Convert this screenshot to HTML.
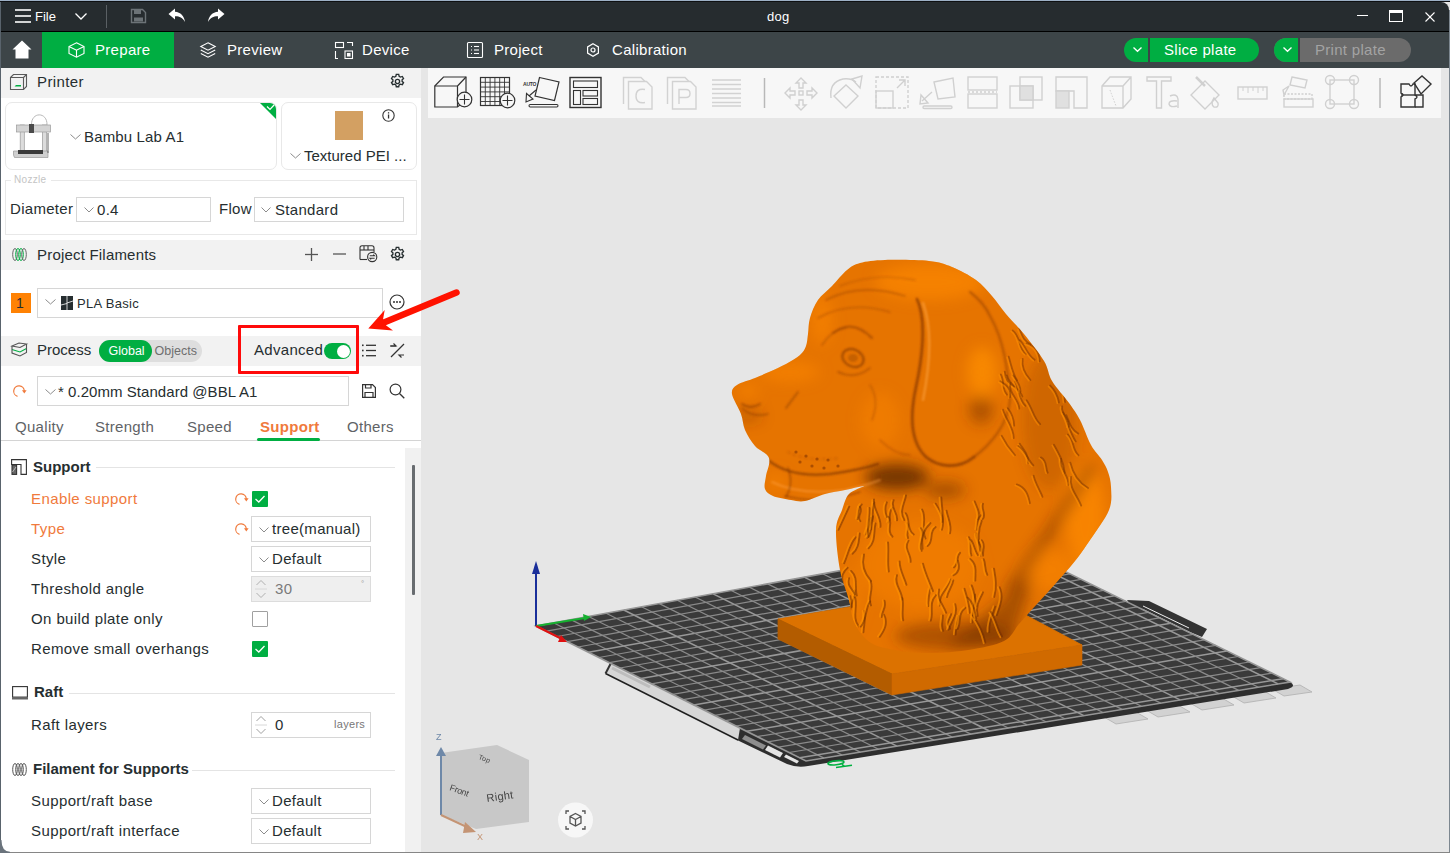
<!DOCTYPE html>
<html><head><meta charset="utf-8">
<style>
*{margin:0;padding:0;box-sizing:border-box}
html,body{width:1450px;height:853px;overflow:hidden}
body{position:relative;background:#e6e6e6;font-family:"Liberation Sans",sans-serif;color:#262e30;letter-spacing:0.3px}
.a{position:absolute}
.t{position:absolute;white-space:nowrap;line-height:1}
svg.i{position:absolute;overflow:visible}
.combo{position:absolute;background:#fff;border:1px solid #d6d6d6}
.chev{position:absolute;width:7px;height:7px;border-right:1px solid #909090;border-bottom:1px solid #909090;transform:rotate(45deg)}
.hdr{position:absolute;left:1px;width:420px;background:#f2f2f2}
.lbl{position:absolute;left:31px;font-size:15px;line-height:1;white-space:nowrap;color:#262e30;letter-spacing:0.4px;margin-top:-1px}
.org{color:#f07a3c}
.cb{position:absolute;left:252px;width:16px;height:16px;background:#00ae42;border-radius:1px}
.cb svg{position:absolute;left:0;top:0}
.cbe{position:absolute;left:252px;width:16px;height:16px;background:#fff;border:1px solid #a0a0a0;border-radius:1px}
.sec{position:absolute;font-size:15px;font-weight:bold;line-height:1;white-space:nowrap;color:#262e30;margin-top:-1.5px;letter-spacing:0px}
.secline{position:absolute;height:1px;background:#e4e4e4}
</style></head>
<body>
<!-- desktop strip -->
<div class="a" style="left:0;top:0;width:1450px;height:1px;background:#9db0c5"></div>
<div class="a" style="left:0;top:1px;width:1450px;height:1px;background:#0e1012"></div>
<!-- title bar -->
<div class="a" style="left:1px;top:2px;width:1448px;height:29px;background:#262c2f;border-top-right-radius:8px"></div>
<!-- tab bar -->
<div class="a" style="left:1px;top:31px;width:1448px;height:1px;background:#000"></div>
<div class="a" style="left:1px;top:32px;width:1448px;height:36px;background:#3d4548"></div>
<!-- left panel -->
<div class="a" style="left:1px;top:68px;width:420px;height:784px;background:#fff"></div>
<!-- window borders -->
<div class="a" style="left:0;top:2px;width:1px;height:851px;background:#59636c"></div>
<div class="a" style="left:1449px;top:10px;width:1px;height:843px;background:#7d8790"></div>
<div class="a" style="left:0;top:852px;width:1450px;height:1px;background:#868686"></div>


<!-- ===== TITLE BAR ===== -->
<svg class="i" style="left:15px;top:9px" width="16" height="14"><g stroke="#fff" stroke-width="1.6"><line x1="0" y1="1" x2="16" y2="1"/><line x1="0" y1="7" x2="16" y2="7"/><line x1="0" y1="13" x2="16" y2="13"/></g></svg>
<div class="t" style="left:35px;top:10px;font-size:13px;color:#fff;letter-spacing:0">File</div>
<svg class="i" style="left:75px;top:13px" width="12" height="7"><polyline points="0.5,0.5 6,6 11.5,0.5" fill="none" stroke="#fff" stroke-width="1.3"/></svg>
<div class="a" style="left:106px;top:5px;width:1px;height:23px;background:#5a6064"></div>
<svg class="i" style="left:130px;top:8px" width="17" height="16"><path d="M1.5 1.5h11l3 3v10h-14z" fill="none" stroke="#6c7377" stroke-width="1.4"/><rect x="4" y="2" width="7" height="4" fill="#6c7377"/><rect x="4" y="9.5" width="9" height="4" fill="#6c7377"/></svg>
<svg class="i" style="left:168px;top:8px" width="18" height="15"><path d="M7 0.5 L0.5 6 L7 11.5 V8.2 C11 8 14.5 9.5 17 14 C16.3 8 12.5 4.3 7 3.8Z" fill="#fff"/></svg>
<svg class="i" style="left:207px;top:8px" width="18" height="15"><path d="M11 0.5 L17.5 6 L11 11.5 V8.2 C7 8 3.5 9.5 1 14 C1.7 8 5.5 4.3 11 3.8Z" fill="#fff"/></svg>
<div class="t" style="left:767px;top:10px;font-size:13px;color:#fff">dog</div>
<div class="a" style="left:1357px;top:15px;width:11px;height:1px;background:#fff"></div>
<div class="a" style="left:1389px;top:10px;width:14px;height:12px;border:1px solid #fff;border-top-width:3px"></div>
<svg class="i" style="left:1425px;top:12px" width="10" height="10"><g stroke="#fff" stroke-width="1.1"><line x1="0.5" y1="0.5" x2="9.5" y2="9.5"/><line x1="9.5" y1="0.5" x2="0.5" y2="9.5"/></g></svg>

<!-- ===== TAB BAR ===== -->
<svg class="i" style="left:12px;top:40px" width="20" height="19"><path d="M10 0.5 L19.5 9.5 H16.5 V18.5 H3.5 V9.5 H0.5Z" fill="#fff"/></svg>
<div class="a" style="left:42px;top:32px;width:132px;height:36px;background:#00ae42"></div>
<svg class="i" style="left:68px;top:42px" width="17" height="16"><g fill="none" stroke="#fff" stroke-width="1.1"><path d="M8.5 0.8 L16 4.5 V11.5 L8.5 15.2 L1 11.5 V4.5Z"/><path d="M1 4.5 L8.5 8.2 L16 4.5 M8.5 8.2 V15.2"/></g></svg>
<div class="t" style="left:95px;top:42px;font-size:15px;color:#fff">Prepare</div>
<svg class="i" style="left:200px;top:42px" width="16" height="16"><g fill="none" stroke="#fff" stroke-width="1.1"><path d="M8 0.8 L15.2 4.5 L8 8.2 L0.8 4.5Z"/><path d="M0.8 8 L8 11.7 L15.2 8"/><path d="M0.8 11.5 L8 15.2 L15.2 11.5"/></g></svg>
<div class="t" style="left:227px;top:42px;font-size:15px;color:#fff">Preview</div>
<svg class="i" style="left:335px;top:42px" width="18" height="17"><g fill="none" stroke="#fff" stroke-width="1.1"><rect x="0.5" y="0.5" width="8" height="5"/><path d="M0.5 9 V16.5 H3 M12 0.5 H17.5 V4"/><rect x="10" y="9" width="7.5" height="7.5"/><rect x="12.5" y="11.5" width="2.5" height="2.5" fill="#fff"/></g></svg>
<div class="t" style="left:362px;top:42px;font-size:15px;color:#fff">Device</div>
<svg class="i" style="left:467px;top:42px" width="16" height="16"><g fill="none" stroke="#fff" stroke-width="1.1"><rect x="0.5" y="0.5" width="15" height="15" rx="1"/><line x1="4" y1="4.5" x2="5" y2="4.5"/><line x1="7" y1="4.5" x2="12" y2="4.5"/><line x1="4" y1="8" x2="5" y2="8"/><line x1="7" y1="8" x2="12" y2="8"/><line x1="4" y1="11.5" x2="5" y2="11.5"/><line x1="7" y1="11.5" x2="12" y2="11.5"/></g></svg>
<div class="t" style="left:494px;top:42px;font-size:15px;color:#fff">Project</div>
<svg class="i" style="left:586px;top:43px" width="14" height="14"><g fill="none" stroke="#fff" stroke-width="1.2"><path d="M7 0.8 L12.4 3.9 V10.1 L7 13.2 L1.6 10.1 V3.9Z"/><circle cx="7" cy="7" r="2"/></g></svg>
<div class="t" style="left:612px;top:42px;font-size:15px;color:#fff">Calibration</div>
<!-- slice / print -->
<div class="a" style="left:1124px;top:38px;width:135px;height:24px;background:#00ae42;border-radius:12px"></div>
<div class="a" style="left:1148px;top:38px;width:2px;height:24px;background:#3c4447"></div>
<svg class="i" style="left:1133px;top:47px" width="9" height="5"><polyline points="0.5,0.5 4.5,4.3 8.5,0.5" fill="none" stroke="#fff" stroke-width="1.3"/></svg>
<div class="t" style="left:1164px;top:42px;font-size:15px;color:#fff">Slice plate</div>
<div class="a" style="left:1274px;top:38px;width:137px;height:24px;background:#6b6b6b;border-radius:12px"></div>
<div class="a" style="left:1274px;top:38px;width:24px;height:24px;background:#00ae42;border-radius:12px 0 0 12px"></div>
<div class="a" style="left:1298px;top:38px;width:2px;height:24px;background:#3c4447"></div>
<svg class="i" style="left:1283px;top:47px" width="9" height="5"><polyline points="0.5,0.5 4.5,4.3 8.5,0.5" fill="none" stroke="#fff" stroke-width="1.3"/></svg>
<div class="t" style="left:1315px;top:42px;font-size:15px;color:#a3a3a3">Print plate</div>


<!-- ===== LEFT PANEL ===== -->
<!-- Printer header -->
<div class="hdr" style="top:68px;height:30px"></div>
<svg class="i" style="left:10px;top:74px" width="17" height="16"><g fill="none" stroke="#5a5a5a" stroke-width="1.1"><path d="M0.5 3.5 L3.5 0.5 H16.5 V12.5 L13.5 15.5 H0.5Z"/><path d="M0.5 3.5 H13.5 V15.5 M13.5 3.5 L16.5 0.5"/></g><path d="M3 12.5 H11 V11 H6 L4.5 12.5Z" fill="#00ae42"/></svg>
<div class="t" style="left:37px;top:74px;font-size:15px;letter-spacing:0.4px">Printer</div>
<svg class="i" style="left:389px;top:73px" width="17" height="17" viewBox="0 0 24 24"><path fill="none" stroke="#262e30" stroke-width="1.9" d="M10.3 2h3.4l.6 2.6 1.9 1.1 2.6-.8 1.7 2.9-2 1.8v2.2l2 1.8-1.7 2.9-2.6-.8-1.9 1.1-.6 2.6h-3.4l-.6-2.6-1.9-1.1-2.6.8-1.7-2.9 2-1.8v-2.2l-2-1.8 1.7-2.9 2.6.8 1.9-1.1z"/><circle cx="12" cy="12" r="3" fill="none" stroke="#262e30" stroke-width="1.9"/></svg>
<!-- printer card -->
<div class="a" style="left:5px;top:102px;width:272px;height:68px;border:1px solid #e8e8e8;border-radius:7px;background:#fff;overflow:hidden">
  <svg class="i" style="right:-1px;top:-1px" width="18" height="18"><path d="M0 0 H18 V18Z" fill="#00ae42"/><polyline points="8,4.5 11,7.5 15.5,2.5" fill="none" stroke="#fff" stroke-width="1.2"/></svg>
</div>
<!-- printer image -->
<svg class="i" style="left:13px;top:112px" width="40" height="48">
 <path d="M18.5 13 C18 -0.5 34.5 -0.5 34 13" fill="none" stroke="#b0b0b0" stroke-width="0.9"/>
 <rect x="7.2" y="13" width="4.1" height="27" fill="#dcdcdc" stroke="#9a9a9a" stroke-width="0.7"/>
 <rect x="29.4" y="13" width="4.1" height="27" fill="#dcdcdc" stroke="#9a9a9a" stroke-width="0.7"/>
 <rect x="3.5" y="13" width="34" height="7" fill="#d4d4d4" stroke="#9a9a9a" stroke-width="0.7"/>
 <rect x="16" y="12" width="5" height="9" fill="#4a4a4a"/>
 <path d="M0.5 39 H35 V45.5 H1.5 Q0 44 0.5 39Z" fill="#cfcfcf" stroke="#9a9a9a" stroke-width="0.7"/>
 <rect x="5" y="38" width="25" height="4" fill="#3a3a3a"/>
 <path d="M35 21 V41" stroke="#555" stroke-width="0.9"/>
</svg>
<svg class="i" style="left:70px;top:134px" width="11" height="6"><polyline points="0.5,0.5 5.5,5 10.5,0.5" fill="none" stroke="#8c8c8c" stroke-width="1"/></svg>
<div class="t" style="left:84px;top:129px;font-size:15px;letter-spacing:0.15px">Bambu Lab A1</div>
<!-- PEI card -->
<div class="a" style="left:281px;top:102px;width:136px;height:68px;border:1px solid #e8e8e8;border-radius:7px;background:#fff"></div>
<div class="a" style="left:335px;top:111px;width:28px;height:29px;background:#d3a062"></div>
<svg class="i" style="left:382px;top:109px" width="13" height="13"><circle cx="6.5" cy="6.5" r="5.7" fill="none" stroke="#333" stroke-width="1.1"/><rect x="5.9" y="5.5" width="1.3" height="4" fill="#333"/><rect x="5.9" y="3.2" width="1.3" height="1.3" fill="#333"/></svg>
<svg class="i" style="left:290px;top:153px" width="11" height="6"><polyline points="0.5,0.5 5.5,5 10.5,0.5" fill="none" stroke="#8c8c8c" stroke-width="1"/></svg>
<div class="t" style="left:304px;top:148px;font-size:15px;letter-spacing:0">Textured PEI ...</div>
<!-- nozzle group -->
<div class="a" style="left:5px;top:180px;width:412px;height:55px;border:1px solid #e8e8e8"></div>
<div class="a" style="left:11px;top:174px;width:40px;height:12px;background:#fff"></div>
<div class="t" style="left:14px;top:175px;font-size:10px;color:#c4c4c4">Nozzle</div>
<div class="t" style="left:10px;top:201px;font-size:15px">Diameter</div>
<div class="combo" style="left:76px;top:197px;width:135px;height:25px"></div>
<svg class="i" style="left:84px;top:207px" width="10" height="6"><polyline points="0.5,0.5 5,5 9.5,0.5" fill="none" stroke="#8c8c8c" stroke-width="1"/></svg>
<div class="t" style="left:97px;top:202px;font-size:15px">0.4</div>
<div class="t" style="left:219px;top:201px;font-size:15px">Flow</div>
<div class="combo" style="left:254px;top:197px;width:150px;height:25px"></div>
<svg class="i" style="left:261px;top:207px" width="10" height="6"><polyline points="0.5,0.5 5,5 9.5,0.5" fill="none" stroke="#8c8c8c" stroke-width="1"/></svg>
<div class="t" style="left:275px;top:202px;font-size:15px">Standard</div>

<!-- Project filaments header -->
<div class="hdr" style="top:240px;height:30px"></div>
<svg class="i" style="left:12px;top:248px" width="15" height="13"><g fill="none" stroke-width="1"><ellipse cx="3" cy="6.5" rx="2.3" ry="6" stroke="#666"/><ellipse cx="6" cy="6.5" rx="2.3" ry="6" stroke="#00ae42"/><ellipse cx="9" cy="6.5" rx="2.3" ry="6" stroke="#00ae42"/><ellipse cx="12" cy="6.5" rx="2.3" ry="6" stroke="#666"/></g></svg>
<div class="t" style="left:37px;top:247px;font-size:15px;letter-spacing:0.2px">Project Filaments</div>
<svg class="i" style="left:305px;top:248px" width="13" height="13"><g stroke="#555" stroke-width="1.3"><line x1="6.5" y1="0" x2="6.5" y2="13"/><line x1="0" y1="6.5" x2="13" y2="6.5"/></g></svg>
<svg class="i" style="left:333px;top:253px" width="13" height="2"><line x1="0" y1="1" x2="13" y2="1" stroke="#555" stroke-width="1.3"/></svg>
<svg class="i" style="left:359px;top:245px" width="19" height="17"><g fill="none" stroke="#333" stroke-width="1.1"><path d="M1 14.5 V3 Q1 0.8 3 0.8 H13 Q15 0.8 15 3 V7"/><line x1="1" y1="5" x2="15" y2="5"/><line x1="5" y1="1" x2="5" y2="5"/><line x1="9" y1="1" x2="9" y2="5"/><line x1="1" y1="14.5" x2="8" y2="14.5"/><circle cx="13.2" cy="12" r="4.6" fill="#f2f2f2"/><path d="M10.8 10.8 H15.5 L14.3 9.6 M15.6 13.2 H10.9 L12.1 14.4"/></g></svg>
<svg class="i" style="left:389px;top:246px" width="17" height="17" viewBox="0 0 24 24"><path fill="none" stroke="#262e30" stroke-width="1.9" d="M10.3 2h3.4l.6 2.6 1.9 1.1 2.6-.8 1.7 2.9-2 1.8v2.2l2 1.8-1.7 2.9-2.6-.8-1.9 1.1-.6 2.6h-3.4l-.6-2.6-1.9-1.1-2.6.8-1.7-2.9 2-1.8v-2.2l-2-1.8 1.7-2.9 2.6.8 1.9-1.1z"/><circle cx="12" cy="12" r="3" fill="none" stroke="#262e30" stroke-width="1.9"/></svg>
<!-- filament row -->
<div class="a" style="left:11px;top:293px;width:20px;height:20px;background:#ff8204"></div>
<div class="t" style="left:16px;top:296px;font-size:14px;color:#262e30">1</div>
<div class="combo" style="left:37px;top:288px;width:346px;height:30px"></div>
<svg class="i" style="left:45px;top:299px" width="11" height="6"><polyline points="0.5,0.5 5.5,5 10.5,0.5" fill="none" stroke="#8c8c8c" stroke-width="1"/></svg>
<svg class="i" style="left:61px;top:296px" width="12" height="14"><rect x="0" y="0" width="12" height="14" fill="#262e30"/><line x1="6" y1="0" x2="6" y2="14" stroke="#fff" stroke-width="0.8"/><line x1="6" y1="7" x2="12" y2="5" stroke="#fff" stroke-width="0.8"/><line x1="0" y1="9" x2="6" y2="7.5" stroke="#fff" stroke-width="0.8"/></svg>
<div class="t" style="left:77px;top:297px;font-size:13px">PLA Basic</div>
<svg class="i" style="left:389px;top:294px" width="16" height="16"><circle cx="8" cy="8" r="7" fill="none" stroke="#333" stroke-width="1.2"/><circle cx="5" cy="8" r="1" fill="#333"/><circle cx="8" cy="8" r="1" fill="#333"/><circle cx="11" cy="8" r="1" fill="#333"/></svg>

<!-- Process header -->
<div class="hdr" style="top:336px;height:30px"></div>
<svg class="i" style="left:11px;top:342px" width="17" height="15"><g fill="none" stroke-width="1.1"><path d="M1 4 L8 1 L15.5 2 L9 5.5Z" stroke="#555"/><path d="M1 7.5 L9 10 L15.5 6.5" stroke="#00ae42"/><path d="M1 4 V11 L9 14 L15.5 10.5 V2" stroke="#555"/></g></svg>
<div class="t" style="left:37px;top:342px;font-size:15px;letter-spacing:0px">Process</div>
<div class="a" style="left:99px;top:340px;width:103px;height:22px;background:#dedede;border-radius:11px"></div>
<div class="a" style="left:99px;top:340px;width:53px;height:22px;background:#00ae42;border-radius:11px"></div>
<div class="t" style="left:108.5px;top:344.5px;font-size:12.5px;color:#fff;letter-spacing:0">Global</div>
<div class="t" style="left:154.5px;top:344.5px;font-size:12.5px;color:#6e6e6e;letter-spacing:0">Objects</div>
<div class="t" style="left:254px;top:342px;font-size:15px">Advanced</div>
<div class="a" style="left:324px;top:343px;width:27px;height:16px;background:#00ae42;border-radius:8px"></div>
<div class="a" style="left:337px;top:344.5px;width:13px;height:13px;background:#fff;border-radius:50%"></div>
<svg class="i" style="left:362px;top:344px" width="15" height="13"><g fill="#333"><rect x="0" y="0.5" width="1.6" height="1.6"/><rect x="0" y="5.7" width="1.6" height="1.6"/><rect x="0" y="10.9" width="1.6" height="1.6"/></g><g stroke="#333" stroke-width="1.3"><line x1="4" y1="1.3" x2="14" y2="1.3"/><line x1="4" y1="6.5" x2="14" y2="6.5"/><line x1="4" y1="11.7" x2="14" y2="11.7"/></g></svg>
<svg class="i" style="left:390px;top:343px" width="15" height="15"><g fill="none" stroke="#333" stroke-width="1.2"><line x1="1" y1="14" x2="14" y2="1"/><polyline points="1,3 6,3 3.5,0.5"/><polyline points="14,12 9,12 11.5,14.5"/><line x1="0" y1="3" x2="6" y2="3"/></g></svg>

<!-- profile combo -->
<svg class="i" style="left:12px;top:384px" width="14" height="14"><path d="M5.5 12.3 A5.3 5.3 0 1 1 12.3 7" fill="none" stroke="#f07a3c" stroke-width="1.2"/><path d="M10 6.2 L14.6 6.2 L12.3 9.4Z" fill="#f07a3c"/></svg>
<div class="combo" style="left:37px;top:376px;width:312px;height:30px"></div>
<svg class="i" style="left:45px;top:389px" width="11" height="6"><polyline points="0.5,0.5 5.5,5 10.5,0.5" fill="none" stroke="#8c8c8c" stroke-width="1"/></svg>
<div class="t" style="left:58px;top:384px;font-size:15px;letter-spacing:0.05px">* 0.20mm Standard @BBL A1</div>
<svg class="i" style="left:362px;top:384px" width="14" height="14"><g fill="none" stroke="#333" stroke-width="1.2"><path d="M0.6 0.6 H10.5 L13.4 3.5 V13.4 H0.6Z"/><path d="M3.5 0.6 V4 H9 V0.6"/><path d="M3 13.4 V8.5 H11 V13.4"/></g></svg>
<svg class="i" style="left:389px;top:383px" width="16" height="16"><circle cx="6.5" cy="6.5" r="5.4" fill="none" stroke="#333" stroke-width="1.2"/><line x1="10.5" y1="10.5" x2="15.3" y2="15.3" stroke="#333" stroke-width="1.3"/></svg>

<!-- tabs -->
<div class="t" style="left:15px;top:419px;font-size:15px;color:#5f6366">Quality</div>
<div class="t" style="left:95px;top:419px;font-size:15px;color:#5f6366">Strength</div>
<div class="t" style="left:187px;top:419px;font-size:15px;color:#5f6366">Speed</div>
<div class="t" style="left:260px;top:419px;font-size:15px;color:#f07a3c;font-weight:bold">Support</div>
<div class="t" style="left:347px;top:419px;font-size:15px;color:#5f6366">Others</div>
<div class="a" style="left:1px;top:440px;width:420px;height:1px;background:#d4d4d4"></div>
<div class="a" style="left:257px;top:438px;width:63px;height:3px;background:#00ae42;border-radius:2px"></div>

<!-- scrollbar -->
<div class="a" style="left:405px;top:448px;width:16px;height:404px;background:#f1f1f1"></div>
<div class="a" style="left:412px;top:465px;width:2.5px;height:130px;background:#686c70;border-radius:1px"></div>

<!-- Support section -->
<svg class="i" style="left:11px;top:459px" width="17" height="16"><g fill="none" stroke="#333" stroke-width="1.1"><path d="M0.6 0.6 H15.4 V15.4 H10 V5.5 H0.6Z"/><rect x="1" y="6" width="4.6" height="9.4" fill="#666"/></g><line x1="1.5" y1="13" x2="5" y2="8" stroke="#ccc" stroke-width="0.8"/></svg>
<div class="sec" style="left:33px;top:460px">Support</div>
<div class="secline" style="left:96px;top:467px;width:299px"></div>

<div class="lbl org" style="left:31px;top:492px">Enable support</div>
<svg class="i" style="left:234px;top:492px" width="14" height="14"><path d="M5.5 12.3 A5.3 5.3 0 1 1 12.3 7" fill="none" stroke="#f07a3c" stroke-width="1.2"/><path d="M10 6.2 L14.6 6.2 L12.3 9.4Z" fill="#f07a3c"/></svg>
<div class="cb" style="top:491px"><svg width="16" height="16"><polyline points="3.5,8 6.8,11 12.5,5" fill="none" stroke="#fff" stroke-width="1.3"/></svg></div>

<div class="lbl org" style="left:31px;top:522px">Type</div>
<svg class="i" style="left:234px;top:522px" width="14" height="14"><path d="M5.5 12.3 A5.3 5.3 0 1 1 12.3 7" fill="none" stroke="#f07a3c" stroke-width="1.2"/><path d="M10 6.2 L14.6 6.2 L12.3 9.4Z" fill="#f07a3c"/></svg>
<div class="combo" style="left:251px;top:516px;width:120px;height:26px"></div>
<svg class="i" style="left:259px;top:527px" width="10" height="6"><polyline points="0.5,0.5 5,5 9.5,0.5" fill="none" stroke="#8c8c8c" stroke-width="1"/></svg>
<div class="t" style="left:272px;top:521px;font-size:15px">tree(manual)</div>

<div class="lbl" style="top:552px">Style</div>
<div class="combo" style="left:251px;top:546px;width:120px;height:26px"></div>
<svg class="i" style="left:259px;top:557px" width="10" height="6"><polyline points="0.5,0.5 5,5 9.5,0.5" fill="none" stroke="#8c8c8c" stroke-width="1"/></svg>
<div class="t" style="left:272px;top:551px;font-size:15px">Default</div>

<div class="lbl" style="top:582px">Threshold angle</div>
<div class="combo" style="left:251px;top:576px;width:120px;height:26px;background:#efefef;border-color:#dcdcdc"></div>
<svg class="i" style="left:255px;top:579px" width="12" height="20"><g fill="none" stroke="#b0b0b0" stroke-width="1"><polyline points="1.5,6 6,1.5 10.5,6"/><polyline points="1.5,14 6,18.5 10.5,14"/></g><line x1="0" y1="10" x2="12" y2="10" stroke="#d8d8d8"/></svg>
<div class="t" style="left:275px;top:581px;font-size:15px;color:#7a7a7a">30</div>
<div class="t" style="left:361px;top:580px;font-size:8px;color:#999">°</div>

<div class="lbl" style="top:612px">On build plate only</div>
<div class="cbe" style="top:611px"></div>

<div class="lbl" style="top:642px">Remove small overhangs</div>
<div class="cb" style="top:641px"><svg width="16" height="16"><polyline points="3.5,8 6.8,11 12.5,5" fill="none" stroke="#fff" stroke-width="1.3"/></svg></div>

<!-- Raft -->
<svg class="i" style="left:12px;top:686px" width="16" height="14"><g fill="none" stroke="#333" stroke-width="1.1"><rect x="0.6" y="0.6" width="14.8" height="10.5"/></g><rect x="0" y="11" width="16" height="2.5" fill="#666"/></svg>
<div class="sec" style="left:34px;top:685px">Raft</div>
<div class="secline" style="left:69px;top:693px;width:326px"></div>
<div class="lbl" style="top:718px">Raft layers</div>
<div class="combo" style="left:251px;top:712px;width:120px;height:26px"></div>
<svg class="i" style="left:255px;top:715px" width="12" height="20"><g fill="none" stroke="#a0a0a0" stroke-width="1"><polyline points="1.5,6 6,1.5 10.5,6"/><polyline points="1.5,14 6,18.5 10.5,14"/></g><line x1="0" y1="10" x2="12" y2="10" stroke="#d8d8d8"/></svg>
<div class="t" style="left:275px;top:717px;font-size:15px">0</div>
<div class="t" style="left:334px;top:719px;font-size:11px;color:#777">layers</div>

<!-- Filament for supports -->
<svg class="i" style="left:12px;top:763px" width="15" height="13"><g fill="none" stroke="#555" stroke-width="1"><ellipse cx="3" cy="6.5" rx="2.3" ry="6"/><ellipse cx="6" cy="6.5" rx="2.3" ry="6"/><ellipse cx="9" cy="6.5" rx="2.3" ry="6"/><ellipse cx="12" cy="6.5" rx="2.3" ry="6"/></g></svg>
<div class="sec" style="left:33px;top:762px">Filament for Supports</div>
<div class="secline" style="left:192px;top:770px;width:203px"></div>
<div class="lbl" style="top:794px">Support/raft base</div>
<div class="combo" style="left:251px;top:788px;width:120px;height:26px"></div>
<svg class="i" style="left:259px;top:799px" width="10" height="6"><polyline points="0.5,0.5 5,5 9.5,0.5" fill="none" stroke="#8c8c8c" stroke-width="1"/></svg>
<div class="t" style="left:272px;top:793px;font-size:15px">Default</div>
<div class="lbl" style="top:824px">Support/raft interface</div>
<div class="combo" style="left:251px;top:818px;width:120px;height:26px"></div>
<svg class="i" style="left:259px;top:829px" width="10" height="6"><polyline points="0.5,0.5 5,5 9.5,0.5" fill="none" stroke="#8c8c8c" stroke-width="1"/></svg>
<div class="t" style="left:272px;top:823px;font-size:15px">Default</div>


<!-- ===== VIEWPORT SCENE ===== -->
<svg class="i" style="left:0;top:0" width="1450" height="853">
 <!-- faint wireframe -->

 <!-- back tab -->
 <path d="M1127 600 L1149 601 L1207 629 L1202 637 L1190 632 L1143 609 L1132 607Z" fill="#333"/>
 <line x1="1143" y1="606" x2="1189" y2="628" stroke="#f0f0f0" stroke-width="1"/>
 <!-- right front small labels -->
 <g fill="#d2d2d2" stroke="#b0b0b0" stroke-width="0.8">
  <path d="M1104 717 L1136 712 L1148 719 L1116 724Z"/>
  <path d="M1146 710 L1178 705 L1190 712 L1158 717Z"/>
  <path d="M1190 703 L1222 698 L1234 705 L1202 710Z"/>
  <path d="M1232 696 L1264 691 L1276 698 L1244 703Z"/>
  <path d="M1272 689 L1300 685 L1312 692 L1284 696Z"/>
 </g>
 <!-- plate outer rim (front edges) -->
 <path d="M738 727 L806 761 L1290 682 Q1297 686 1288 689 L808 766 Q797 768 787 764 L737 740Z" fill="#2e2e2e"/>
 <!-- front-left label strip -->
 <path d="M611 663 L605.5 673.5 L738 740 L740 728Z" fill="#d6d6d6"/>
 <path d="M605.5 673.5 L738 740" stroke="#1e1e1e" stroke-width="1.4"/>
 <path d="M611 663 L605.5 673.5" stroke="#333" stroke-width="2"/>
 <path d="M612 668 L650 687" stroke="#bdbdbd" stroke-width="3"/>
 <path d="M768 745.5 L783 753 L780 757.5 L765 750Z M786 754.5 L799 761 L797 763.5 L784 757Z" fill="#e4e4e4"/>
 <path d="M745 735 L766 745.5 L763 749.5 L742 739Z" fill="#8e8e8e"/>
 <!-- plate -->
 <path d="M536 626 L1003 541 L1290 682 L806 761Z" fill="#3a3a3a"/>
 <g stroke="#8a8a8a" stroke-width="1.25">
<line x1="546.5" y1="631.2" x2="1014.1" y2="546.5"/>
<line x1="553.4" y1="622.8" x2="824.0" y2="758.1"/>
<line x1="556.9" y1="636.5" x2="1025.3" y2="551.9"/>
<line x1="570.9" y1="619.6" x2="842.2" y2="755.1"/>
<line x1="567.4" y1="641.7" x2="1036.4" y2="557.4"/>
<line x1="588.5" y1="616.5" x2="860.3" y2="752.1"/>
<line x1="577.9" y1="647.0" x2="1047.5" y2="562.9"/>
<line x1="606.1" y1="613.2" x2="878.6" y2="749.2"/>
<line x1="588.4" y1="652.2" x2="1058.7" y2="568.4" stroke="#989898" stroke-width="1.5"/>
<line x1="623.8" y1="610.0" x2="896.9" y2="746.2" stroke="#989898" stroke-width="1.5"/>
<line x1="598.9" y1="657.5" x2="1069.9" y2="573.8"/>
<line x1="641.5" y1="606.8" x2="915.3" y2="743.2"/>
<line x1="609.4" y1="662.7" x2="1081.0" y2="579.3"/>
<line x1="659.3" y1="603.6" x2="933.8" y2="740.1"/>
<line x1="619.9" y1="668.0" x2="1092.2" y2="584.8"/>
<line x1="677.2" y1="600.3" x2="952.3" y2="737.1"/>
<line x1="630.5" y1="673.2" x2="1103.4" y2="590.3"/>
<line x1="695.1" y1="597.0" x2="970.9" y2="734.1"/>
<line x1="641.0" y1="678.5" x2="1114.6" y2="595.8" stroke="#989898" stroke-width="1.5"/>
<line x1="713.1" y1="593.8" x2="989.5" y2="731.0" stroke="#989898" stroke-width="1.5"/>
<line x1="651.5" y1="683.8" x2="1125.8" y2="601.3"/>
<line x1="731.2" y1="590.5" x2="1008.3" y2="728.0"/>
<line x1="662.1" y1="689.0" x2="1137.0" y2="606.8"/>
<line x1="749.4" y1="587.2" x2="1027.1" y2="724.9"/>
<line x1="672.6" y1="694.3" x2="1148.2" y2="612.3"/>
<line x1="767.6" y1="583.9" x2="1045.9" y2="721.8"/>
<line x1="683.2" y1="699.6" x2="1159.4" y2="617.8"/>
<line x1="785.8" y1="580.5" x2="1064.9" y2="718.7"/>
<line x1="693.7" y1="704.9" x2="1170.6" y2="623.3" stroke="#989898" stroke-width="1.5"/>
<line x1="804.2" y1="577.2" x2="1083.9" y2="715.6" stroke="#989898" stroke-width="1.5"/>
<line x1="704.3" y1="710.1" x2="1181.8" y2="628.9"/>
<line x1="822.6" y1="573.8" x2="1103.0" y2="712.5"/>
<line x1="714.8" y1="715.4" x2="1193.1" y2="634.4"/>
<line x1="841.1" y1="570.5" x2="1122.2" y2="709.4"/>
<line x1="725.4" y1="720.7" x2="1204.3" y2="639.9"/>
<line x1="859.7" y1="567.1" x2="1141.4" y2="706.3"/>
<line x1="736.0" y1="726.0" x2="1215.6" y2="645.4"/>
<line x1="878.3" y1="563.7" x2="1160.7" y2="703.1"/>
<line x1="746.6" y1="731.3" x2="1226.8" y2="651.0" stroke="#989898" stroke-width="1.5"/>
<line x1="897.0" y1="560.3" x2="1180.1" y2="699.9" stroke="#989898" stroke-width="1.5"/>
<line x1="757.2" y1="736.6" x2="1238.1" y2="656.5"/>
<line x1="915.7" y1="556.9" x2="1199.5" y2="696.8"/>
<line x1="767.8" y1="741.9" x2="1249.4" y2="662.0"/>
<line x1="934.6" y1="553.5" x2="1219.1" y2="693.6"/>
<line x1="778.4" y1="747.2" x2="1260.6" y2="667.6"/>
<line x1="953.5" y1="550.0" x2="1238.7" y2="690.4"/>
<line x1="789.0" y1="752.5" x2="1271.9" y2="673.1"/>
<line x1="972.5" y1="546.6" x2="1258.4" y2="687.2"/>
<line x1="799.6" y1="757.8" x2="1283.2" y2="678.7" stroke="#989898" stroke-width="1.5"/>
<line x1="991.5" y1="543.1" x2="1278.1" y2="683.9" stroke="#989898" stroke-width="1.5"/>
 </g>
 <path d="M536 626 L1003 541 L1290 682 L806 761Z" fill="none" stroke="#959595" stroke-width="1.6"/>
 <!-- green "01" -->
 <g fill="none" stroke="#00b040" stroke-width="1.6"><ellipse cx="836" cy="762.8" rx="8" ry="2" transform="rotate(-6 836 762.8)"/><path d="M836 767.5 L852 765.3 M844 766.2 L842 764.3"/></g>
 <!-- axes -->
 <line x1="536" y1="626" x2="536" y2="572" stroke="#1a2f9a" stroke-width="2"/>
 <path d="M532 574 L536 561 L540 574Z" fill="#1a2f9a"/>
 <line x1="536" y1="626" x2="585" y2="618" stroke="#16b030" stroke-width="2"/>
 <path d="M583 614 L591 617 L584 621Z" fill="#16b030"/>
 <line x1="536" y1="626" x2="562" y2="639" stroke="#e01010" stroke-width="2"/>
 <path d="M561 635 L567 642 L558 642Z" fill="#e01010"/>
</svg>


<!-- ===== DOG ===== -->
<svg class="i" style="left:0;top:0" width="1450" height="853">
 <defs>
  <radialGradient id="hl1" cx="0.5" cy="0.5" r="0.5"><stop offset="0" stop-color="#ff9a2a" stop-opacity="0.9"/><stop offset="1" stop-color="#ff9a2a" stop-opacity="0"/></radialGradient>
  <radialGradient id="sh1" cx="0.5" cy="0.5" r="0.5"><stop offset="0" stop-color="#8a3c00" stop-opacity="0.55"/><stop offset="1" stop-color="#8a3c00" stop-opacity="0"/></radialGradient>
  <filter id="b6" x="-50%" y="-50%" width="200%" height="200%"><feGaussianBlur stdDeviation="7"/></filter><filter id="b07" x="-10%" y="-10%" width="120%" height="120%"><feGaussianBlur stdDeviation="0.7"/></filter><filter id="b1" x="-20%" y="-20%" width="140%" height="140%"><feGaussianBlur stdDeviation="1"/></filter>
  <clipPath id="dogclip"><path d="M732.0 394.0 C731.3 389.2 733.2 387.7 737.0 385.0 C740.8 382.3 749.7 380.2 755.0 378.0 C760.3 375.8 763.8 374.3 769.0 372.0 C774.2 369.7 780.8 366.8 786.0 364.0 C791.2 361.2 796.7 358.0 800.0 355.0 C803.3 352.0 804.7 349.5 806.0 346.0 C807.3 342.5 807.3 338.7 808.0 334.0 C808.7 329.3 808.3 323.7 810.0 318.0 C811.7 312.3 814.3 305.3 818.0 300.0 C821.7 294.7 827.2 291.0 832.0 286.0 C836.8 281.0 842.3 273.8 847.0 270.0 C851.7 266.2 853.7 264.7 860.0 263.0 C866.3 261.3 873.5 260.3 885.0 260.0 C896.5 259.7 917.8 259.8 929.0 261.0 C940.2 262.2 944.2 263.8 952.0 267.0 C959.8 270.2 969.3 275.2 976.0 280.0 C982.7 284.8 987.0 290.3 992.0 296.0 C997.0 301.7 1000.7 307.7 1006.0 314.0 C1011.3 320.3 1017.7 326.2 1024.0 334.0 C1030.3 341.8 1039.3 353.2 1044.0 361.0 C1048.7 368.8 1047.8 374.0 1052.0 381.0 C1056.2 388.0 1064.3 396.5 1069.0 403.0 C1073.7 409.5 1076.3 413.0 1080.0 420.0 C1083.7 427.0 1087.3 438.3 1091.0 445.0 C1094.7 451.7 1099.2 455.5 1102.0 460.0 C1104.8 464.5 1106.5 467.5 1108.0 472.0 C1109.5 476.5 1110.8 480.7 1111.0 487.0 C1111.2 493.3 1112.5 501.2 1109.0 510.0 C1105.5 518.8 1095.7 531.5 1090.0 540.0 C1084.3 548.5 1080.7 553.8 1075.0 561.0 C1069.3 568.2 1062.3 575.8 1056.0 583.0 C1049.7 590.2 1043.2 597.2 1037.0 604.0 C1030.8 610.8 1024.5 617.8 1019.0 624.0 C1013.5 630.2 1012.5 636.7 1004.0 641.0 C995.5 645.3 981.3 648.0 968.0 650.0 C954.7 652.0 937.8 653.3 924.0 653.0 C910.2 652.7 894.5 650.2 885.0 648.0 C875.5 645.8 872.2 644.3 867.0 640.0 C861.8 635.7 857.0 628.7 854.0 622.0 C851.0 615.3 851.3 608.7 849.0 600.0 C846.7 591.3 842.2 581.7 840.0 570.0 C837.8 558.3 835.7 540.0 836.0 530.0 C836.3 520.0 839.8 516.0 842.0 510.0 C844.2 504.0 845.3 498.0 849.0 494.0 C852.7 490.0 864.7 486.7 864.0 486.0 C863.3 485.3 851.5 488.7 845.0 490.0 C838.5 491.3 831.7 492.2 825.0 494.0 C818.3 495.8 810.7 500.0 805.0 501.0 C799.3 502.0 796.3 500.8 791.0 500.0 C785.7 499.2 777.3 497.8 773.0 496.0 C768.7 494.2 766.2 492.3 765.0 489.0 C763.8 485.7 765.3 481.2 766.0 476.0 C766.7 470.8 770.8 463.0 769.0 458.0 C767.2 453.0 759.0 450.7 755.0 446.0 C751.0 441.3 747.3 435.3 745.0 430.0 C742.7 424.7 743.2 420.0 741.0 414.0 C738.8 408.0 732.7 398.8 732.0 394.0Z"/></clipPath>
 </defs>
 <!-- slab -->
 <path d="M778 619 L849 607 L971 586 L1082 645 L892 674Z" fill="#dc7200" stroke="#dc7200" stroke-width="0.8"/>
 <path d="M778 619 L892 674 L892 695 L778 639Z" fill="#b35c00" stroke="#b35c00" stroke-width="0.8"/>
 <path d="M892 674 L1082 645 L1082 665 L892 695Z" fill="#d06a00" stroke="#d06a00" stroke-width="0.6"/>
 <!-- dog body -->
 <path d="M732.0 394.0 C731.3 389.2 733.2 387.7 737.0 385.0 C740.8 382.3 749.7 380.2 755.0 378.0 C760.3 375.8 763.8 374.3 769.0 372.0 C774.2 369.7 780.8 366.8 786.0 364.0 C791.2 361.2 796.7 358.0 800.0 355.0 C803.3 352.0 804.7 349.5 806.0 346.0 C807.3 342.5 807.3 338.7 808.0 334.0 C808.7 329.3 808.3 323.7 810.0 318.0 C811.7 312.3 814.3 305.3 818.0 300.0 C821.7 294.7 827.2 291.0 832.0 286.0 C836.8 281.0 842.3 273.8 847.0 270.0 C851.7 266.2 853.7 264.7 860.0 263.0 C866.3 261.3 873.5 260.3 885.0 260.0 C896.5 259.7 917.8 259.8 929.0 261.0 C940.2 262.2 944.2 263.8 952.0 267.0 C959.8 270.2 969.3 275.2 976.0 280.0 C982.7 284.8 987.0 290.3 992.0 296.0 C997.0 301.7 1000.7 307.7 1006.0 314.0 C1011.3 320.3 1017.7 326.2 1024.0 334.0 C1030.3 341.8 1039.3 353.2 1044.0 361.0 C1048.7 368.8 1047.8 374.0 1052.0 381.0 C1056.2 388.0 1064.3 396.5 1069.0 403.0 C1073.7 409.5 1076.3 413.0 1080.0 420.0 C1083.7 427.0 1087.3 438.3 1091.0 445.0 C1094.7 451.7 1099.2 455.5 1102.0 460.0 C1104.8 464.5 1106.5 467.5 1108.0 472.0 C1109.5 476.5 1110.8 480.7 1111.0 487.0 C1111.2 493.3 1112.5 501.2 1109.0 510.0 C1105.5 518.8 1095.7 531.5 1090.0 540.0 C1084.3 548.5 1080.7 553.8 1075.0 561.0 C1069.3 568.2 1062.3 575.8 1056.0 583.0 C1049.7 590.2 1043.2 597.2 1037.0 604.0 C1030.8 610.8 1024.5 617.8 1019.0 624.0 C1013.5 630.2 1012.5 636.7 1004.0 641.0 C995.5 645.3 981.3 648.0 968.0 650.0 C954.7 652.0 937.8 653.3 924.0 653.0 C910.2 652.7 894.5 650.2 885.0 648.0 C875.5 645.8 872.2 644.3 867.0 640.0 C861.8 635.7 857.0 628.7 854.0 622.0 C851.0 615.3 851.3 608.7 849.0 600.0 C846.7 591.3 842.2 581.7 840.0 570.0 C837.8 558.3 835.7 540.0 836.0 530.0 C836.3 520.0 839.8 516.0 842.0 510.0 C844.2 504.0 845.3 498.0 849.0 494.0 C852.7 490.0 864.7 486.7 864.0 486.0 C863.3 485.3 851.5 488.7 845.0 490.0 C838.5 491.3 831.7 492.2 825.0 494.0 C818.3 495.8 810.7 500.0 805.0 501.0 C799.3 502.0 796.3 500.8 791.0 500.0 C785.7 499.2 777.3 497.8 773.0 496.0 C768.7 494.2 766.2 492.3 765.0 489.0 C763.8 485.7 765.3 481.2 766.0 476.0 C766.7 470.8 770.8 463.0 769.0 458.0 C767.2 453.0 759.0 450.7 755.0 446.0 C751.0 441.3 747.3 435.3 745.0 430.0 C742.7 424.7 743.2 420.0 741.0 414.0 C738.8 408.0 732.7 398.8 732.0 394.0Z" fill="#e67400"/>
 <g clip-path="url(#dogclip)">
  <g filter="url(#b6)">
   <ellipse cx="930" cy="282" rx="55" ry="18" fill="#ff8a00" opacity="0.6"/>
   <ellipse cx="822" cy="320" rx="10" ry="25" fill="#ff8a00" opacity="0.5"/>
   <ellipse cx="790" cy="372" rx="30" ry="10" fill="#ff8a00" opacity="0.5"/>
   <ellipse cx="748" cy="391" rx="10" ry="6" fill="#ff8a00" opacity="0.6"/>
   <ellipse cx="982" cy="372" rx="15" ry="25" fill="#ff9000" opacity="0.7"/>
   <ellipse cx="1085" cy="515" rx="20" ry="50" fill="#ff8a00" opacity="0.7"/>
   <ellipse cx="1050" cy="570" rx="25" ry="20" fill="#ff8a00" opacity="0.5"/>
   <ellipse cx="880" cy="420" rx="20" ry="28" fill="#ff8a00" opacity="0.35"/>
   <ellipse cx="776" cy="482" rx="10" ry="10" fill="#ff8a00" opacity="0.4"/>
   <ellipse cx="897" cy="477" rx="32" ry="13" fill="#5a2400" opacity="0.8"/>
   <ellipse cx="945" cy="490" rx="20" ry="8" fill="#6a2800" opacity="0.5"/>
   <ellipse cx="981" cy="410" rx="12" ry="14" fill="#7a3000" opacity="0.5"/>
   <ellipse cx="748" cy="416" rx="14" ry="6" fill="#7a3000" opacity="0.35"/>
   <ellipse cx="955" cy="636" rx="60" ry="14" fill="#7a3000" opacity="0.5"/>
   <path d="M1035 572 L945 648 L1012 646Z" fill="#6a2800" opacity="0.5"/>
   <ellipse cx="920" cy="565" rx="60" ry="45" fill="#ff8a00" opacity="0.35"/>
   <ellipse cx="1050" cy="420" rx="28" ry="70" fill="#8a3a00" opacity="0.25"/>
   <ellipse cx="850" cy="600" rx="12" ry="30" fill="#ff8a00" opacity="0.3"/>
   <path d="M1008 592 Q1050 535 1092 466" fill="none" stroke="#6a2800" stroke-width="9" stroke-opacity="0.55" transform="translate(0 0)"/>
  </g>
  <g fill="none" filter="url(#b1)" stroke-linecap="round">
   <!-- ear outline -->
   <path d="M917 299 C927 320 922 360 916 387 C911 410 908 440 926 457 C938 467 958 470 974 457" stroke="#7a3000" stroke-width="2.6" stroke-opacity="0.7"/>
   <path d="M974 457 C990 445 1008 425 1010 400 C1008 370 1004 340 990 316 C985 305 978 298 970 292" stroke="#8a3a00" stroke-width="2.2" stroke-opacity="0.5"/>
   <path d="M923 303 C933 330 929 370 923 400" stroke="#ffa848" stroke-width="2.2" stroke-opacity="0.6"/>
   <!-- eye -->
   <ellipse cx="853" cy="358" rx="11" ry="8.5" stroke="#7a3000" stroke-width="2" stroke-opacity="0.65" transform="rotate(25 853 358)"/>
   <ellipse cx="853" cy="358" rx="5" ry="4" fill="#8a3a00" fill-opacity="0.35"/>
   <path d="M833 333 Q852 318 872 338" stroke="#7a3000" stroke-width="1.8" stroke-opacity="0.55"/>
   <path d="M838 372 Q855 380 870 368" stroke="#7a3000" stroke-width="1.6" stroke-opacity="0.45"/>
   <path d="M826 300 Q860 282 905 296" stroke="#8a3a00" stroke-width="1.6" stroke-opacity="0.4"/>
   <path d="M840 286 Q875 272 915 280" stroke="#8a3a00" stroke-width="1.4" stroke-opacity="0.3"/>
   <!-- snout -->
   <path d="M798 392 Q792 400 786 408" stroke="#7a3000" stroke-width="1.6" stroke-opacity="0.5"/>
   <path d="M742 408 Q752 418 768 414" stroke="#7a3000" stroke-width="1.6" stroke-opacity="0.45"/>
   <!-- mouth -->
   <path d="M768 460 Q790 478 830 474 Q860 470 878 464" stroke="#6a2800" stroke-width="2.2" stroke-opacity="0.65"/>
   <path d="M772 482 Q800 496 845 490 Q865 486 880 480" stroke="#ffa040" stroke-width="2" stroke-opacity="0.5"/>
   <path d="M785 496 Q820 505 860 492" stroke="#7a3000" stroke-width="1.6" stroke-opacity="0.5"/>
   <path d="M788 452 Q808 462 840 458" stroke="#8a3a00" stroke-width="1.2" stroke-opacity="0.35" stroke-dasharray="2 4"/>
   <!-- extra head details -->
   <path d="M742 404 Q750 410 760 404" stroke="#6a2800" stroke-width="2" stroke-opacity="0.45"/>
   
   <path d="M788 468 Q794 484 786 497" stroke="#7a3000" stroke-width="1.6" stroke-opacity="0.5"/>
   <path d="M818 318 Q850 300 890 312" stroke="#8a3a00" stroke-width="1.5" stroke-opacity="0.35"/>
   <path d="M822 345 Q832 330 846 328" stroke="#8a3a00" stroke-width="1.5" stroke-opacity="0.4"/>
   <path d="M870 385 Q880 400 872 420" stroke="#8a3a00" stroke-width="1.5" stroke-opacity="0.35"/>
   <path d="M880 440 Q895 455 910 455" stroke="#8a3a00" stroke-width="1.5" stroke-opacity="0.35"/>
   <!-- chest shadow line -->
   
  </g>
  <g filter="url(#b07)"><circle cx="796.0" cy="452.0" r="1.6" fill="#7a3000" fill-opacity="0.55"/><circle cx="806.0" cy="456.0" r="1.6" fill="#7a3000" fill-opacity="0.55"/><circle cx="817.0" cy="459.0" r="1.6" fill="#7a3000" fill-opacity="0.55"/><circle cx="828.0" cy="460.0" r="1.6" fill="#7a3000" fill-opacity="0.55"/><circle cx="800.0" cy="462.0" r="1.6" fill="#7a3000" fill-opacity="0.55"/><circle cx="812.0" cy="466.0" r="1.6" fill="#7a3000" fill-opacity="0.55"/><circle cx="824.0" cy="468.0" r="1.6" fill="#7a3000" fill-opacity="0.55"/><circle cx="838.0" cy="466.0" r="1.6" fill="#7a3000" fill-opacity="0.55"/></g>
  <g fill="none" stroke-linecap="round" filter="url(#b07)">
<path d="M870.6 581.2 C874.1 589.2 867.3 597.4 871.0 605.4" stroke="#6e2e00" stroke-opacity="0.50" stroke-width="2.0"/>
<path d="M868.8 581.3 C872.3 589.2 865.6 597.4 869.2 605.4" stroke="#ff9208" stroke-opacity="0.60" stroke-width="1.8"/>
<path d="M970.2 559.1 C977.7 564.9 975.1 573.0 975.3 580.6" stroke="#6e2e00" stroke-opacity="0.50" stroke-width="2.0"/>
<path d="M968.5 559.5 C975.9 565.3 973.3 573.4 973.5 581.0" stroke="#ff9208" stroke-opacity="0.60" stroke-width="1.8"/>
<path d="M935.7 503.7 C940.9 511.6 945.2 519.7 941.9 529.6" stroke="#6e2e00" stroke-opacity="0.50" stroke-width="2.0"/>
<path d="M934.0 504.1 C939.2 512.0 943.4 520.1 940.2 530.0" stroke="#ff9208" stroke-opacity="0.60" stroke-width="1.8"/>
<path d="M999.6 587.3 C1004.2 597.2 999.8 606.1 996.8 615.2" stroke="#6e2e00" stroke-opacity="0.50" stroke-width="2.0"/>
<path d="M997.8 587.2 C1002.5 597.0 998.0 605.9 995.0 615.0" stroke="#ff9208" stroke-opacity="0.60" stroke-width="1.8"/>
<path d="M922.1 509.5 C927.4 518.7 920.6 529.3 925.5 538.5" stroke="#6e2e00" stroke-opacity="0.50" stroke-width="2.0"/>
<path d="M920.3 509.7 C925.6 518.9 918.8 529.5 923.7 538.7" stroke="#ff9208" stroke-opacity="0.60" stroke-width="1.8"/>
<path d="M864.4 611.0 C865.9 618.2 863.9 625.2 863.4 632.2" stroke="#6e2e00" stroke-opacity="0.50" stroke-width="2.0"/>
<path d="M862.6 610.9 C864.1 618.1 862.1 625.1 861.6 632.1" stroke="#ff9208" stroke-opacity="0.60" stroke-width="1.8"/>
<path d="M874.0 499.6 C872.8 509.5 881.6 516.9 880.4 526.8" stroke="#6e2e00" stroke-opacity="0.50" stroke-width="2.0"/>
<path d="M872.2 500.1 C871.1 509.9 879.9 517.3 878.6 527.2" stroke="#ff9208" stroke-opacity="0.60" stroke-width="1.8"/>
<path d="M995.2 606.7 C992.2 615.0 988.5 623.0 989.2 632.1" stroke="#6e2e00" stroke-opacity="0.50" stroke-width="2.0"/>
<path d="M993.4 606.3 C990.5 614.6 986.8 622.6 987.5 631.7" stroke="#ff9208" stroke-opacity="0.60" stroke-width="1.8"/>
<path d="M864.0 554.5 C861.4 564.6 864.2 573.3 871.0 580.9" stroke="#6e2e00" stroke-opacity="0.50" stroke-width="2.0"/>
<path d="M862.2 555.0 C859.7 565.1 862.4 573.7 869.3 581.3" stroke="#ff9208" stroke-opacity="0.60" stroke-width="1.8"/>
<path d="M908.5 540.7 C903.3 548.3 911.3 554.6 910.6 561.8" stroke="#6e2e00" stroke-opacity="0.50" stroke-width="2.0"/>
<path d="M906.7 540.8 C901.5 548.5 909.5 554.8 908.8 561.9" stroke="#ff9208" stroke-opacity="0.60" stroke-width="1.8"/>
<path d="M849.2 506.7 C845.7 514.4 842.2 522.1 838.5 529.8" stroke="#6e2e00" stroke-opacity="0.50" stroke-width="2.0"/>
<path d="M847.5 505.9 C844.0 513.7 840.5 521.4 836.9 529.1" stroke="#ff9208" stroke-opacity="0.60" stroke-width="1.8"/>
<path d="M930.3 588.5 C929.1 594.3 927.7 600.0 928.7 606.0" stroke="#6e2e00" stroke-opacity="0.50" stroke-width="2.0"/>
<path d="M928.5 588.4 C927.3 594.1 925.9 599.9 926.9 605.8" stroke="#ff9208" stroke-opacity="0.60" stroke-width="1.8"/>
<path d="M873.0 516.3 C872.3 523.0 867.2 528.0 865.9 534.5" stroke="#6e2e00" stroke-opacity="0.50" stroke-width="2.0"/>
<path d="M871.3 515.6 C870.7 522.4 865.5 527.3 864.2 533.8" stroke="#ff9208" stroke-opacity="0.60" stroke-width="1.8"/>
<path d="M892.5 507.9 C888.0 511.8 891.3 518.0 888.5 522.4" stroke="#6e2e00" stroke-opacity="0.50" stroke-width="2.0"/>
<path d="M890.8 507.4 C886.2 511.4 889.5 517.5 886.7 521.9" stroke="#ff9208" stroke-opacity="0.60" stroke-width="1.8"/>
<path d="M950.9 579.5 C948.3 588.6 938.1 594.6 939.9 605.6" stroke="#6e2e00" stroke-opacity="0.50" stroke-width="2.0"/>
<path d="M949.3 578.8 C946.6 587.9 936.5 593.9 938.2 604.9" stroke="#ff9208" stroke-opacity="0.60" stroke-width="1.8"/>
<path d="M994.0 568.8 C995.6 578.2 997.2 587.5 994.2 596.9" stroke="#6e2e00" stroke-opacity="0.50" stroke-width="2.0"/>
<path d="M992.2 568.8 C993.8 578.2 995.4 587.6 992.4 597.0" stroke="#ff9208" stroke-opacity="0.60" stroke-width="1.8"/>
<path d="M980.8 515.3 C976.3 519.3 978.3 525.1 976.8 529.9" stroke="#6e2e00" stroke-opacity="0.50" stroke-width="2.0"/>
<path d="M979.1 514.8 C974.6 518.8 976.6 524.6 975.1 529.4" stroke="#ff9208" stroke-opacity="0.60" stroke-width="1.8"/>
<path d="M974.7 501.5 C976.8 507.3 980.8 512.7 978.0 519.3" stroke="#6e2e00" stroke-opacity="0.50" stroke-width="2.0"/>
<path d="M973.0 501.8 C975.0 507.6 979.1 513.0 976.3 519.7" stroke="#ff9208" stroke-opacity="0.60" stroke-width="1.8"/>
<path d="M855.8 537.3 C849.2 544.7 848.2 554.6 844.1 563.2" stroke="#6e2e00" stroke-opacity="0.50" stroke-width="2.0"/>
<path d="M854.1 536.5 C847.6 543.9 846.6 553.9 842.5 562.4" stroke="#ff9208" stroke-opacity="0.60" stroke-width="1.8"/>
<path d="M884.1 614.9 C888.2 623.3 884.5 630.2 879.7 636.8" stroke="#6e2e00" stroke-opacity="0.50" stroke-width="2.0"/>
<path d="M882.3 614.5 C886.4 622.9 882.8 629.8 877.9 636.5" stroke="#ff9208" stroke-opacity="0.60" stroke-width="1.8"/>
<path d="M974.9 594.4 C975.0 603.8 972.3 613.0 972.4 622.4" stroke="#6e2e00" stroke-opacity="0.50" stroke-width="2.0"/>
<path d="M973.1 594.2 C973.2 603.7 970.5 612.8 970.7 622.2" stroke="#ff9208" stroke-opacity="0.60" stroke-width="1.8"/>
<path d="M976.6 533.5 C975.0 541.5 985.3 547.1 981.0 555.6" stroke="#6e2e00" stroke-opacity="0.50" stroke-width="2.0"/>
<path d="M974.9 533.8 C973.2 541.8 983.6 547.5 979.3 556.0" stroke="#ff9208" stroke-opacity="0.60" stroke-width="1.8"/>
<path d="M951.2 614.2 C949.1 618.9 946.2 623.5 950.0 628.6" stroke="#6e2e00" stroke-opacity="0.50" stroke-width="2.0"/>
<path d="M949.4 614.1 C947.3 618.7 944.4 623.3 948.3 628.4" stroke="#ff9208" stroke-opacity="0.60" stroke-width="1.8"/>
<path d="M935.6 527.1 C928.4 531.5 934.3 541.4 927.6 546.0" stroke="#6e2e00" stroke-opacity="0.50" stroke-width="2.0"/>
<path d="M933.9 526.4 C926.8 530.8 932.6 540.7 925.9 545.3" stroke="#ff9208" stroke-opacity="0.60" stroke-width="1.8"/>
<path d="M859.7 506.7 C864.2 511.3 855.7 516.5 860.4 521.1" stroke="#6e2e00" stroke-opacity="0.50" stroke-width="2.0"/>
<path d="M857.9 506.8 C862.4 511.4 853.9 516.6 858.6 521.2" stroke="#ff9208" stroke-opacity="0.60" stroke-width="1.8"/>
<path d="M946.6 510.8 C947.8 518.3 952.2 525.2 950.0 533.2" stroke="#6e2e00" stroke-opacity="0.50" stroke-width="2.0"/>
<path d="M944.8 511.1 C946.0 518.5 950.4 525.5 948.3 533.4" stroke="#ff9208" stroke-opacity="0.60" stroke-width="1.8"/>
<path d="M870.7 518.0 C868.9 524.5 873.7 532.1 867.1 537.7" stroke="#6e2e00" stroke-opacity="0.50" stroke-width="2.0"/>
<path d="M869.0 517.7 C867.2 524.1 871.9 531.8 865.3 537.4" stroke="#ff9208" stroke-opacity="0.60" stroke-width="1.8"/>
<path d="M955.2 604.2 C958.7 614.2 951.2 621.4 948.6 629.8" stroke="#6e2e00" stroke-opacity="0.50" stroke-width="2.0"/>
<path d="M953.4 603.8 C957.0 613.8 949.4 620.9 946.8 629.3" stroke="#ff9208" stroke-opacity="0.60" stroke-width="1.8"/>
<path d="M854.8 590.5 C856.7 596.5 850.5 601.1 851.8 607.0" stroke="#6e2e00" stroke-opacity="0.50" stroke-width="2.0"/>
<path d="M853.1 590.2 C855.0 596.2 848.7 600.7 850.0 606.7" stroke="#ff9208" stroke-opacity="0.60" stroke-width="1.8"/>
<path d="M893.6 500.2 C890.0 507.7 898.3 513.1 897.0 520.2" stroke="#6e2e00" stroke-opacity="0.50" stroke-width="2.0"/>
<path d="M891.8 500.5 C888.2 508.0 896.5 513.4 895.2 520.5" stroke="#ff9208" stroke-opacity="0.60" stroke-width="1.8"/>
<path d="M923.0 563.7 C925.2 573.2 929.6 582.0 933.0 591.1" stroke="#6e2e00" stroke-opacity="0.50" stroke-width="2.0"/>
<path d="M921.3 564.3 C923.5 573.8 927.9 582.6 931.3 591.7" stroke="#ff9208" stroke-opacity="0.60" stroke-width="1.8"/>
<path d="M958.9 615.9 C957.5 622.1 956.0 628.2 955.6 634.6" stroke="#6e2e00" stroke-opacity="0.50" stroke-width="2.0"/>
<path d="M957.1 615.6 C955.7 621.7 954.2 627.9 953.8 634.3" stroke="#ff9208" stroke-opacity="0.60" stroke-width="1.8"/>
<path d="M854.9 596.8 C858.3 606.4 851.5 617.2 858.6 626.2" stroke="#6e2e00" stroke-opacity="0.50" stroke-width="2.0"/>
<path d="M853.1 597.1 C856.5 606.6 849.7 617.4 856.8 626.5" stroke="#ff9208" stroke-opacity="0.60" stroke-width="1.8"/>
<path d="M861.7 504.5 C857.3 508.5 859.5 514.4 857.6 519.1" stroke="#6e2e00" stroke-opacity="0.50" stroke-width="2.0"/>
<path d="M859.9 504.0 C855.6 508.0 857.8 513.9 855.8 518.6" stroke="#ff9208" stroke-opacity="0.60" stroke-width="1.8"/>
<path d="M941.3 497.5 C941.5 505.6 943.5 513.6 942.5 521.8" stroke="#6e2e00" stroke-opacity="0.50" stroke-width="2.0"/>
<path d="M939.5 497.6 C939.7 505.7 941.7 513.7 940.7 521.8" stroke="#ff9208" stroke-opacity="0.60" stroke-width="1.8"/>
<path d="M907.2 523.2 C910.5 527.9 905.4 533.2 908.1 537.9" stroke="#6e2e00" stroke-opacity="0.50" stroke-width="2.0"/>
<path d="M905.4 523.3 C908.8 528.0 903.6 533.3 906.3 538.0" stroke="#ff9208" stroke-opacity="0.60" stroke-width="1.8"/>
<path d="M971.7 585.5 C974.6 592.1 975.1 599.3 976.5 606.2" stroke="#6e2e00" stroke-opacity="0.50" stroke-width="2.0"/>
<path d="M969.9 585.9 C972.9 592.5 973.3 599.7 974.8 606.6" stroke="#ff9208" stroke-opacity="0.60" stroke-width="1.8"/>
<path d="M942.9 615.4 C943.1 620.5 940.5 625.7 943.2 630.8" stroke="#6e2e00" stroke-opacity="0.50" stroke-width="2.0"/>
<path d="M941.1 615.4 C941.3 620.5 938.7 625.7 941.4 630.8" stroke="#ff9208" stroke-opacity="0.60" stroke-width="1.8"/>
<path d="M983.0 592.4 C979.3 599.8 975.2 607.1 977.7 615.9" stroke="#6e2e00" stroke-opacity="0.50" stroke-width="2.0"/>
<path d="M981.3 592.0 C977.5 599.4 973.5 606.7 975.9 615.5" stroke="#ff9208" stroke-opacity="0.60" stroke-width="1.8"/>
<path d="M953.3 580.4 C952.5 586.4 947.8 591.1 947.0 597.1" stroke="#6e2e00" stroke-opacity="0.50" stroke-width="2.0"/>
<path d="M951.7 579.7 C950.8 585.8 946.1 590.4 945.3 596.5" stroke="#ff9208" stroke-opacity="0.60" stroke-width="1.8"/>
<path d="M972.8 615.5 C979.0 623.6 983.2 632.6 985.3 642.6" stroke="#6e2e00" stroke-opacity="0.50" stroke-width="2.0"/>
<path d="M971.2 616.2 C977.4 624.3 981.6 633.3 983.7 643.3" stroke="#ff9208" stroke-opacity="0.60" stroke-width="1.8"/>
<path d="M905.6 513.2 C910.6 519.4 906.1 529.3 913.8 534.5" stroke="#6e2e00" stroke-opacity="0.50" stroke-width="2.0"/>
<path d="M904.0 513.8 C908.9 520.1 904.5 530.0 912.2 535.2" stroke="#ff9208" stroke-opacity="0.60" stroke-width="1.8"/>
<path d="M960.1 552.8 C955.8 556.7 959.3 563.8 954.0 567.3" stroke="#6e2e00" stroke-opacity="0.50" stroke-width="2.0"/>
<path d="M958.4 552.1 C954.1 556.0 957.6 563.1 952.3 566.6" stroke="#ff9208" stroke-opacity="0.60" stroke-width="1.8"/>
<path d="M897.0 575.2 C893.4 584.4 902.5 591.0 902.1 599.6" stroke="#6e2e00" stroke-opacity="0.50" stroke-width="2.0"/>
<path d="M895.2 575.6 C891.6 584.8 900.7 591.4 900.4 599.9" stroke="#ff9208" stroke-opacity="0.60" stroke-width="1.8"/>
<path d="M884.4 600.7 C887.1 606.7 881.5 611.3 881.8 616.9" stroke="#6e2e00" stroke-opacity="0.50" stroke-width="2.0"/>
<path d="M882.6 600.4 C885.3 606.4 879.7 611.0 880.0 616.6" stroke="#ff9208" stroke-opacity="0.60" stroke-width="1.8"/>
<path d="M888.0 542.4 C889.0 552.0 887.2 561.8 888.8 571.4" stroke="#6e2e00" stroke-opacity="0.50" stroke-width="2.0"/>
<path d="M886.2 542.4 C887.2 552.1 885.4 561.8 887.0 571.5" stroke="#ff9208" stroke-opacity="0.60" stroke-width="1.8"/>
<path d="M888.5 516.8 C893.5 522.6 885.7 531.1 892.5 536.6" stroke="#6e2e00" stroke-opacity="0.50" stroke-width="2.0"/>
<path d="M886.7 517.1 C891.7 523.0 884.0 531.4 890.7 536.9" stroke="#ff9208" stroke-opacity="0.60" stroke-width="1.8"/>
<path d="M850.3 596.3 C854.3 606.8 846.9 615.3 845.2 624.8" stroke="#6e2e00" stroke-opacity="0.50" stroke-width="2.0"/>
<path d="M848.6 596.0 C852.5 606.5 845.1 615.0 843.4 624.5" stroke="#ff9208" stroke-opacity="0.60" stroke-width="1.8"/>
<path d="M851.1 571.0 C858.7 577.8 854.3 587.5 856.8 595.5" stroke="#6e2e00" stroke-opacity="0.50" stroke-width="2.0"/>
<path d="M849.3 571.4 C857.0 578.2 852.6 587.9 855.0 595.9" stroke="#ff9208" stroke-opacity="0.60" stroke-width="1.8"/>
<path d="M859.7 533.6 C858.7 540.8 859.0 548.4 852.5 553.6" stroke="#6e2e00" stroke-opacity="0.50" stroke-width="2.0"/>
<path d="M858.0 533.0 C857.0 540.2 857.3 547.8 850.8 553.0" stroke="#ff9208" stroke-opacity="0.60" stroke-width="1.8"/>
<path d="M967.7 597.8 C974.0 603.3 974.5 611.2 976.3 618.5" stroke="#6e2e00" stroke-opacity="0.50" stroke-width="2.0"/>
<path d="M966.1 598.5 C972.4 604.0 972.9 611.9 974.7 619.2" stroke="#ff9208" stroke-opacity="0.60" stroke-width="1.8"/>
<path d="M930.5 523.1 C923.0 530.2 920.9 538.9 922.6 548.8" stroke="#6e2e00" stroke-opacity="0.50" stroke-width="2.0"/>
<path d="M928.8 522.6 C921.3 529.6 919.1 538.3 920.9 548.2" stroke="#ff9208" stroke-opacity="0.60" stroke-width="1.8"/>
<path d="M847.7 567.8 C843.2 571.5 841.3 576.3 842.5 582.1" stroke="#6e2e00" stroke-opacity="0.50" stroke-width="2.0"/>
<path d="M846.0 567.1 C841.5 570.9 839.6 575.7 840.8 581.5" stroke="#ff9208" stroke-opacity="0.60" stroke-width="1.8"/>
<path d="M874.2 502.5 C871.9 511.3 872.9 520.4 871.7 529.4" stroke="#6e2e00" stroke-opacity="0.50" stroke-width="2.0"/>
<path d="M872.4 502.3 C870.1 511.1 871.1 520.3 869.9 529.2" stroke="#ff9208" stroke-opacity="0.60" stroke-width="1.8"/>
<path d="M969.0 537.2 C972.2 543.0 969.1 549.6 971.4 555.4" stroke="#6e2e00" stroke-opacity="0.50" stroke-width="2.0"/>
<path d="M967.2 537.5 C970.4 543.2 967.3 549.8 969.6 555.6" stroke="#ff9208" stroke-opacity="0.60" stroke-width="1.8"/>
<path d="M983.0 503.9 C980.8 508.9 986.6 514.0 982.8 519.0" stroke="#6e2e00" stroke-opacity="0.50" stroke-width="2.0"/>
<path d="M981.2 503.9 C979.0 508.9 984.8 514.0 981.0 518.9" stroke="#ff9208" stroke-opacity="0.60" stroke-width="1.8"/>
<path d="M886.8 502.3 C884.7 507.2 885.0 512.1 886.9 516.9" stroke="#6e2e00" stroke-opacity="0.50" stroke-width="2.0"/>
<path d="M885.0 502.4 C882.9 507.2 883.2 512.1 885.1 516.9" stroke="#ff9208" stroke-opacity="0.60" stroke-width="1.8"/>
<path d="M869.5 508.0 C870.3 517.7 866.6 527.2 868.5 536.9" stroke="#6e2e00" stroke-opacity="0.50" stroke-width="2.0"/>
<path d="M867.7 508.0 C868.5 517.6 864.8 527.1 866.7 536.8" stroke="#ff9208" stroke-opacity="0.60" stroke-width="1.8"/>
<path d="M957.8 560.6 C959.7 566.4 960.2 571.9 953.5 575.2" stroke="#6e2e00" stroke-opacity="0.50" stroke-width="2.0"/>
<path d="M956.1 560.1 C957.9 565.9 958.5 571.4 951.8 574.7" stroke="#ff9208" stroke-opacity="0.60" stroke-width="1.8"/>
<path d="M899.6 561.6 C899.4 570.0 904.2 576.9 906.4 584.7" stroke="#6e2e00" stroke-opacity="0.50" stroke-width="2.0"/>
<path d="M897.9 562.1 C897.7 570.5 902.4 577.4 904.6 585.2" stroke="#ff9208" stroke-opacity="0.60" stroke-width="1.8"/>
<path d="M870.1 601.4 C865.0 609.0 867.1 619.4 860.8 626.6" stroke="#6e2e00" stroke-opacity="0.50" stroke-width="2.0"/>
<path d="M868.4 600.7 C863.3 608.4 865.4 618.7 859.1 626.0" stroke="#ff9208" stroke-opacity="0.60" stroke-width="1.8"/>
<path d="M965.5 607.8 C957.6 612.9 961.5 622.4 957.7 629.0" stroke="#6e2e00" stroke-opacity="0.50" stroke-width="2.0"/>
<path d="M963.9 607.2 C955.9 612.3 959.8 621.8 956.0 628.3" stroke="#ff9208" stroke-opacity="0.60" stroke-width="1.8"/>
<path d="M991.0 612.1 C996.3 619.5 997.1 628.9 1002.0 636.4" stroke="#6e2e00" stroke-opacity="0.50" stroke-width="2.0"/>
<path d="M989.3 612.8 C994.6 620.2 995.5 629.6 1000.4 637.2" stroke="#ff9208" stroke-opacity="0.60" stroke-width="1.8"/>
<path d="M939.1 589.5 C936.5 598.7 943.4 605.1 946.2 612.8" stroke="#6e2e00" stroke-opacity="0.50" stroke-width="2.0"/>
<path d="M937.4 590.0 C934.8 599.3 941.7 605.6 944.5 613.3" stroke="#ff9208" stroke-opacity="0.60" stroke-width="1.8"/>
<path d="M981.7 520.9 C977.9 530.7 977.8 540.7 980.2 550.8" stroke="#6e2e00" stroke-opacity="0.50" stroke-width="2.0"/>
<path d="M979.9 520.8 C976.1 530.6 976.0 540.6 978.4 550.7" stroke="#ff9208" stroke-opacity="0.60" stroke-width="1.8"/>
<path d="M981.8 540.3 C986.1 545.1 982.2 550.5 983.1 555.6" stroke="#6e2e00" stroke-opacity="0.50" stroke-width="2.0"/>
<path d="M980.0 540.4 C984.3 545.2 980.4 550.7 981.3 555.7" stroke="#ff9208" stroke-opacity="0.60" stroke-width="1.8"/>
<path d="M971.3 540.3 C974.3 544.8 974.7 550.5 977.8 555.0" stroke="#6e2e00" stroke-opacity="0.50" stroke-width="2.0"/>
<path d="M969.7 541.0 C972.7 545.5 973.1 551.2 976.1 555.7" stroke="#ff9208" stroke-opacity="0.60" stroke-width="1.8"/>
<path d="M849.1 578.2 C846.2 585.4 852.7 589.2 854.9 594.5" stroke="#6e2e00" stroke-opacity="0.50" stroke-width="2.0"/>
<path d="M847.4 578.8 C844.5 586.0 851.0 589.8 853.2 595.1" stroke="#ff9208" stroke-opacity="0.60" stroke-width="1.8"/>
<path d="M983.7 559.2 C985.8 564.2 984.5 570.0 987.3 574.8" stroke="#6e2e00" stroke-opacity="0.50" stroke-width="2.0"/>
<path d="M982.0 559.6 C984.1 564.6 982.7 570.4 985.6 575.2" stroke="#ff9208" stroke-opacity="0.60" stroke-width="1.8"/>
<path d="M964.5 588.9 C967.0 596.7 969.4 604.5 969.7 612.8" stroke="#6e2e00" stroke-opacity="0.50" stroke-width="2.0"/>
<path d="M962.7 589.3 C965.3 597.1 967.6 604.9 968.0 613.2" stroke="#ff9208" stroke-opacity="0.60" stroke-width="1.8"/>
<path d="M920.9 528.2 C926.7 535.5 917.6 543.4 921.7 550.8" stroke="#6e2e00" stroke-opacity="0.50" stroke-width="2.0"/>
<path d="M919.1 528.3 C924.9 535.6 915.8 543.5 919.9 550.8" stroke="#ff9208" stroke-opacity="0.60" stroke-width="1.8"/>
<path d="M935.9 595.3 C928.4 602.6 933.9 612.5 930.7 620.6" stroke="#6e2e00" stroke-opacity="0.50" stroke-width="2.0"/>
<path d="M934.1 595.0 C926.6 602.2 932.1 612.1 929.0 620.2" stroke="#ff9208" stroke-opacity="0.60" stroke-width="1.8"/>
<path d="M906.0 495.5 C904.5 503.6 898.9 511.4 904.3 520.0" stroke="#6e2e00" stroke-opacity="0.50" stroke-width="2.0"/>
<path d="M904.2 495.3 C902.7 503.5 897.1 511.3 902.5 519.9" stroke="#ff9208" stroke-opacity="0.60" stroke-width="1.8"/>
<path d="M875.5 523.4 C873.4 531.7 876.0 541.4 868.6 548.2" stroke="#6e2e00" stroke-opacity="0.50" stroke-width="2.0"/>
<path d="M873.8 522.9 C871.7 531.2 874.3 540.9 866.9 547.7" stroke="#ff9208" stroke-opacity="0.60" stroke-width="1.8"/>
<path d="M902.4 598.3 C904.0 605.6 901.4 613.0 903.2 620.3" stroke="#6e2e00" stroke-opacity="0.50" stroke-width="2.0"/>
<path d="M900.6 598.4 C902.2 605.6 899.6 613.1 901.4 620.3" stroke="#ff9208" stroke-opacity="0.60" stroke-width="1.8"/>
<path d="M1053.9 444.7 C1058.9 453.5 1063.9 462.2 1064.7 472.6" stroke="#6e2e00" stroke-opacity="0.45" stroke-width="1.8"/>
<path d="M1052.2 445.4 C1057.2 454.1 1062.2 462.9 1063.0 473.2" stroke="#ff9208" stroke-opacity="0.50" stroke-width="1.6"/>
<path d="M1070.4 462.7 C1072.9 473.5 1078.3 482.3 1088.1 488.0" stroke="#6e2e00" stroke-opacity="0.45" stroke-width="1.8"/>
<path d="M1068.9 463.8 C1071.4 474.6 1076.9 483.3 1086.6 489.0" stroke="#ff9208" stroke-opacity="0.50" stroke-width="1.6"/>
<path d="M1006.9 375.4 C1008.9 384.8 1019.6 387.8 1022.4 396.5" stroke="#6e2e00" stroke-opacity="0.45" stroke-width="1.8"/>
<path d="M1005.5 376.5 C1007.5 385.9 1018.1 388.9 1021.0 397.6" stroke="#ff9208" stroke-opacity="0.50" stroke-width="1.6"/>
<path d="M1061.4 373.2 C1065.1 378.6 1066.7 385.4 1072.5 389.2" stroke="#6e2e00" stroke-opacity="0.45" stroke-width="1.8"/>
<path d="M1059.9 374.3 C1063.7 379.6 1065.3 386.4 1071.1 390.3" stroke="#ff9208" stroke-opacity="0.50" stroke-width="1.6"/>
<path d="M1019.6 443.6 C1023.9 449.4 1028.7 455.1 1028.2 463.1" stroke="#6e2e00" stroke-opacity="0.45" stroke-width="1.8"/>
<path d="M1018.0 444.3 C1022.3 450.2 1027.1 455.8 1026.6 463.8" stroke="#ff9208" stroke-opacity="0.50" stroke-width="1.6"/>
<path d="M1012.7 330.4 C1021.1 336.0 1017.7 348.4 1026.1 354.0" stroke="#6e2e00" stroke-opacity="0.45" stroke-width="1.8"/>
<path d="M1011.1 331.3 C1019.5 336.9 1016.1 349.3 1024.6 354.9" stroke="#ff9208" stroke-opacity="0.50" stroke-width="1.6"/>
<path d="M1058.9 323.8 C1063.4 331.8 1066.7 340.5 1070.7 348.8" stroke="#6e2e00" stroke-opacity="0.45" stroke-width="1.8"/>
<path d="M1057.3 324.6 C1061.8 332.6 1065.1 341.2 1069.0 349.6" stroke="#ff9208" stroke-opacity="0.50" stroke-width="1.6"/>
<path d="M1086.6 387.3 C1091.6 394.6 1095.4 402.5 1097.3 411.2" stroke="#6e2e00" stroke-opacity="0.45" stroke-width="1.8"/>
<path d="M1085.0 388.0 C1090.0 395.3 1093.8 403.2 1095.6 411.9" stroke="#ff9208" stroke-opacity="0.50" stroke-width="1.6"/>
<path d="M1067.9 434.4 C1074.4 439.8 1072.0 449.8 1078.6 455.2" stroke="#6e2e00" stroke-opacity="0.45" stroke-width="1.8"/>
<path d="M1066.3 435.3 C1072.8 440.7 1070.3 450.7 1077.0 456.0" stroke="#ff9208" stroke-opacity="0.50" stroke-width="1.6"/>
<path d="M1001.8 435.8 C1005.3 442.8 1009.7 449.1 1015.0 455.0" stroke="#6e2e00" stroke-opacity="0.45" stroke-width="1.8"/>
<path d="M1000.3 436.8 C1003.8 443.8 1008.3 450.2 1013.5 456.0" stroke="#ff9208" stroke-opacity="0.50" stroke-width="1.6"/>
<path d="M1007.8 408.2 C1011.9 413.3 1014.0 419.2 1014.2 425.7" stroke="#6e2e00" stroke-opacity="0.45" stroke-width="1.8"/>
<path d="M1006.1 408.8 C1010.2 414.0 1012.3 419.8 1012.5 426.4" stroke="#ff9208" stroke-opacity="0.50" stroke-width="1.6"/>
<path d="M1019.4 328.7 C1021.9 334.6 1023.5 341.3 1030.6 344.0" stroke="#6e2e00" stroke-opacity="0.45" stroke-width="1.8"/>
<path d="M1017.9 329.7 C1020.5 335.7 1022.0 342.4 1029.1 345.0" stroke="#ff9208" stroke-opacity="0.50" stroke-width="1.6"/>
<path d="M1019.9 340.1 C1025.7 346.0 1027.3 355.1 1034.7 359.7" stroke="#6e2e00" stroke-opacity="0.45" stroke-width="1.8"/>
<path d="M1018.5 341.2 C1024.3 347.0 1025.8 356.1 1033.3 360.8" stroke="#ff9208" stroke-opacity="0.50" stroke-width="1.6"/>
<path d="M1018.3 445.9 C1025.8 450.5 1027.4 459.6 1033.4 465.4" stroke="#6e2e00" stroke-opacity="0.45" stroke-width="1.8"/>
<path d="M1016.9 447.0 C1024.3 451.6 1026.0 460.7 1032.0 466.5" stroke="#ff9208" stroke-opacity="0.50" stroke-width="1.6"/>
<path d="M1008.7 356.7 C1011.2 364.7 1012.4 373.2 1017.1 380.4" stroke="#6e2e00" stroke-opacity="0.45" stroke-width="1.8"/>
<path d="M1007.0 357.3 C1009.5 365.3 1010.7 373.8 1015.4 381.0" stroke="#ff9208" stroke-opacity="0.50" stroke-width="1.6"/>
<path d="M1000.8 374.5 C1004.5 380.7 1001.7 388.9 1007.0 394.6" stroke="#6e2e00" stroke-opacity="0.45" stroke-width="1.8"/>
<path d="M999.1 375.0 C1002.8 381.2 1000.0 389.4 1005.3 395.2" stroke="#ff9208" stroke-opacity="0.50" stroke-width="1.6"/>
<path d="M1003.1 409.7 C1005.8 419.5 1013.8 427.2 1013.8 438.0" stroke="#6e2e00" stroke-opacity="0.45" stroke-width="1.8"/>
<path d="M1001.4 410.4 C1004.1 420.1 1012.1 427.9 1012.1 438.7" stroke="#ff9208" stroke-opacity="0.50" stroke-width="1.6"/>
<path d="M1083.4 334.4 C1084.6 345.1 1090.4 354.1 1094.4 363.8" stroke="#6e2e00" stroke-opacity="0.45" stroke-width="1.8"/>
<path d="M1081.7 335.0 C1082.9 345.7 1088.7 354.7 1092.7 364.4" stroke="#ff9208" stroke-opacity="0.50" stroke-width="1.6"/>
<path d="M1014.8 381.4 C1019.5 389.0 1018.6 399.1 1025.4 405.8" stroke="#6e2e00" stroke-opacity="0.45" stroke-width="1.8"/>
<path d="M1013.1 382.1 C1017.9 389.7 1016.9 399.8 1023.8 406.5" stroke="#ff9208" stroke-opacity="0.50" stroke-width="1.6"/>
<path d="M1004.8 371.7 C1004.9 378.5 1008.4 383.2 1014.0 386.5" stroke="#6e2e00" stroke-opacity="0.45" stroke-width="1.8"/>
<path d="M1003.3 372.7 C1003.4 379.5 1006.8 384.1 1012.5 387.5" stroke="#ff9208" stroke-opacity="0.50" stroke-width="1.6"/>
<path d="M1013.4 375.5 C1016.4 380.7 1021.1 385.1 1020.5 391.8" stroke="#6e2e00" stroke-opacity="0.45" stroke-width="1.8"/>
<path d="M1011.8 376.2 C1014.8 381.4 1019.5 385.8 1018.9 392.6" stroke="#ff9208" stroke-opacity="0.50" stroke-width="1.6"/>
<path d="M1033.7 475.7 C1035.2 483.3 1039.8 489.6 1042.5 496.8" stroke="#6e2e00" stroke-opacity="0.45" stroke-width="1.8"/>
<path d="M1032.0 476.4 C1033.5 484.0 1038.2 490.3 1040.8 497.5" stroke="#ff9208" stroke-opacity="0.50" stroke-width="1.6"/>
<path d="M1050.1 385.5 C1055.1 390.1 1057.8 395.9 1059.0 402.5" stroke="#6e2e00" stroke-opacity="0.45" stroke-width="1.8"/>
<path d="M1048.5 386.3 C1053.5 390.9 1056.2 396.7 1057.4 403.3" stroke="#ff9208" stroke-opacity="0.50" stroke-width="1.6"/>
<path d="M1016.8 484.4 C1025.8 487.4 1028.3 494.9 1029.9 503.1" stroke="#6e2e00" stroke-opacity="0.45" stroke-width="1.8"/>
<path d="M1015.3 485.4 C1024.3 488.4 1026.8 495.9 1028.4 504.1" stroke="#ff9208" stroke-opacity="0.50" stroke-width="1.6"/>
<path d="M1078.2 380.6 C1081.7 389.0 1088.7 395.0 1093.2 402.7" stroke="#6e2e00" stroke-opacity="0.45" stroke-width="1.8"/>
<path d="M1076.7 381.7 C1080.2 390.0 1087.2 396.0 1091.7 403.7" stroke="#ff9208" stroke-opacity="0.50" stroke-width="1.6"/>
<path d="M1066.3 415.1 C1069.3 421.9 1070.9 429.6 1078.3 433.6" stroke="#6e2e00" stroke-opacity="0.45" stroke-width="1.8"/>
<path d="M1064.8 416.1 C1067.8 422.9 1069.4 430.6 1076.8 434.6" stroke="#ff9208" stroke-opacity="0.50" stroke-width="1.6"/>
<path d="M1062.2 406.4 C1060.4 414.4 1070.6 418.6 1068.7 426.7" stroke="#6e2e00" stroke-opacity="0.45" stroke-width="1.8"/>
<path d="M1060.5 407.0 C1058.7 415.0 1068.9 419.2 1067.0 427.2" stroke="#ff9208" stroke-opacity="0.50" stroke-width="1.6"/>
<path d="M1061.1 459.0 C1059.2 468.8 1069.0 475.3 1068.5 484.8" stroke="#6e2e00" stroke-opacity="0.45" stroke-width="1.8"/>
<path d="M1059.4 459.5 C1057.5 469.3 1067.2 475.8 1066.7 485.3" stroke="#ff9208" stroke-opacity="0.50" stroke-width="1.6"/>
<path d="M1089.7 379.0 C1095.5 385.0 1094.9 392.8 1095.6 400.2" stroke="#6e2e00" stroke-opacity="0.45" stroke-width="1.8"/>
<path d="M1088.0 379.5 C1093.8 385.5 1093.1 393.3 1093.9 400.7" stroke="#ff9208" stroke-opacity="0.50" stroke-width="1.6"/>
<path d="M1056.3 369.1 C1057.4 375.9 1058.2 382.8 1063.3 388.2" stroke="#6e2e00" stroke-opacity="0.45" stroke-width="1.8"/>
<path d="M1054.6 369.7 C1055.7 376.5 1056.5 383.4 1061.6 388.8" stroke="#ff9208" stroke-opacity="0.50" stroke-width="1.6"/>
<path d="M1071.1 477.0 C1069.0 488.4 1077.8 496.0 1081.2 505.6" stroke="#6e2e00" stroke-opacity="0.45" stroke-width="1.8"/>
<path d="M1069.4 477.6 C1067.3 489.0 1076.1 496.6 1079.5 506.2" stroke="#ff9208" stroke-opacity="0.50" stroke-width="1.6"/>
<path d="M1063.1 412.5 C1068.1 421.8 1069.8 432.5 1075.8 441.4" stroke="#6e2e00" stroke-opacity="0.45" stroke-width="1.8"/>
<path d="M1061.5 413.2 C1066.5 422.5 1068.1 433.3 1074.1 442.1" stroke="#ff9208" stroke-opacity="0.50" stroke-width="1.6"/>
<path d="M1026.5 343.3 C1035.7 345.7 1039.3 352.3 1039.8 361.1" stroke="#6e2e00" stroke-opacity="0.45" stroke-width="1.8"/>
<path d="M1025.1 344.4 C1034.3 346.8 1037.8 353.3 1038.3 362.2" stroke="#ff9208" stroke-opacity="0.50" stroke-width="1.6"/>
<path d="M1040.9 457.4 C1047.4 460.6 1045.3 467.7 1047.7 472.7" stroke="#6e2e00" stroke-opacity="0.45" stroke-width="1.8"/>
<path d="M1039.2 458.1 C1045.8 461.3 1043.7 468.4 1046.1 473.5" stroke="#ff9208" stroke-opacity="0.50" stroke-width="1.6"/>
<path d="M1026.6 400.3 C1032.3 407.6 1033.3 417.5 1040.2 424.1" stroke="#6e2e00" stroke-opacity="0.45" stroke-width="1.8"/>
<path d="M1025.1 401.2 C1030.7 408.5 1031.7 418.4 1038.6 425.0" stroke="#ff9208" stroke-opacity="0.50" stroke-width="1.6"/>
<path d="M1010.4 382.8 C1008.0 393.3 1019.1 399.0 1019.3 408.5" stroke="#6e2e00" stroke-opacity="0.45" stroke-width="1.8"/>
<path d="M1008.7 383.4 C1006.3 393.9 1017.4 399.6 1017.6 409.1" stroke="#ff9208" stroke-opacity="0.50" stroke-width="1.6"/>
<path d="M1056.3 376.3 C1063.3 383.4 1063.9 392.9 1065.1 402.0" stroke="#6e2e00" stroke-opacity="0.45" stroke-width="1.8"/>
<path d="M1054.6 376.9 C1061.6 384.0 1062.2 393.4 1063.4 402.6" stroke="#ff9208" stroke-opacity="0.50" stroke-width="1.6"/>
<path d="M1084.3 383.4 C1089.7 390.7 1086.9 401.0 1093.0 408.0" stroke="#6e2e00" stroke-opacity="0.45" stroke-width="1.8"/>
<path d="M1082.6 384.0 C1088.0 391.3 1085.2 401.6 1091.3 408.6" stroke="#ff9208" stroke-opacity="0.50" stroke-width="1.6"/>
<path d="M1000.3 381.3 C1006.5 384.8 1011.7 388.9 1010.0 397.2" stroke="#6e2e00" stroke-opacity="0.45" stroke-width="1.8"/>
<path d="M998.8 382.2 C1005.0 385.7 1010.1 389.9 1008.5 398.2" stroke="#ff9208" stroke-opacity="0.50" stroke-width="1.6"/>
<path d="M1072.3 351.2 C1072.2 360.6 1075.9 368.1 1083.4 373.8" stroke="#6e2e00" stroke-opacity="0.45" stroke-width="1.8"/>
<path d="M1070.7 352.0 C1070.6 361.4 1074.3 368.9 1081.8 374.6" stroke="#ff9208" stroke-opacity="0.50" stroke-width="1.6"/>
<path d="M1055.9 350.4 C1057.6 361.0 1069.2 363.9 1073.1 372.7" stroke="#6e2e00" stroke-opacity="0.45" stroke-width="1.8"/>
<path d="M1054.5 351.5 C1056.2 362.1 1067.8 365.0 1071.7 373.8" stroke="#ff9208" stroke-opacity="0.50" stroke-width="1.6"/>
<path d="M1022.7 359.0 C1021.3 367.4 1025.1 374.0 1030.5 380.0" stroke="#6e2e00" stroke-opacity="0.45" stroke-width="1.8"/>
<path d="M1021.1 359.6 C1019.6 368.1 1023.4 374.6 1028.8 380.6" stroke="#ff9208" stroke-opacity="0.50" stroke-width="1.6"/>
<path d="M1065.6 363.9 C1070.1 369.5 1069.4 378.2 1077.0 381.8" stroke="#6e2e00" stroke-opacity="0.45" stroke-width="1.8"/>
<path d="M1064.1 364.9 C1068.6 370.4 1067.9 379.2 1075.4 382.7" stroke="#ff9208" stroke-opacity="0.50" stroke-width="1.6"/>
<path d="M1089.6 335.1 C1093.2 345.0 1093.6 355.8 1098.8 365.1" stroke="#6e2e00" stroke-opacity="0.45" stroke-width="1.8"/>
<path d="M1087.9 335.6 C1091.4 345.5 1091.8 356.3 1097.1 365.7" stroke="#ff9208" stroke-opacity="0.50" stroke-width="1.6"/>
<path d="M1070.6 353.6 C1068.5 363.2 1070.4 371.6 1077.5 378.6" stroke="#6e2e00" stroke-opacity="0.45" stroke-width="1.8"/>
<path d="M1068.9 354.1 C1066.8 363.6 1068.7 372.0 1075.8 379.0" stroke="#ff9208" stroke-opacity="0.50" stroke-width="1.6"/>
  </g>
 </g>
</svg>


<!-- ===== TOOLBAR ===== -->
<div class="a" style="left:428px;top:68px;width:1013px;height:50px;background:#f7f7f7"></div>
<svg class="i" style="left:0;top:0" width="1450" height="120">
 <g fill="none" stroke="#333" stroke-width="1.2" stroke-linejoin="miter">
  <!-- add cube -->
  <path d="M434.8 86 L443.5 77 H466 V100 L457.5 107 H434.8Z"/>
  <path d="M434.8 86 H457.5 V107 M457.5 86 L466 77"/>
  <circle cx="464.5" cy="99.5" r="7.3" fill="#f7f7f7"/>
  <path d="M464.5 94.5 V104.5 M459.5 99.5 H469.5" stroke-width="1.1"/>
  <!-- grid plus -->
  <rect x="480.5" y="77.5" width="29" height="28"/>
  <path d="M485.3 77.5 V105.5 M490.1 77.5 V105.5 M494.9 77.5 V105.5 M499.7 77.5 V105.5 M504.5 77.5 V105.5 M480.5 82.3 H509.5 M480.5 87.1 H509.5 M480.5 91.9 H509.5 M480.5 96.7 H509.5 M480.5 101.5 H509.5" stroke-width="0.9"/>
  <circle cx="507.5" cy="100.5" r="7.3" fill="#f7f7f7"/>
  <path d="M507.5 95.5 V105.5 M502.5 100.5 H512.5" stroke-width="1.1"/>
  <!-- auto orient -->
  <path d="M539.5 77.5 L559 82 L554.5 100.5 L535 96Z" stroke-width="1.2"/>
  <path d="M536 90 L529 96" stroke-width="1.1"/>
  <path d="M526.5 93.5 L526 102 L533 99Z" stroke-width="1.1"/>
  <rect x="529" y="104.5" width="29" height="2.5" rx="1.2" stroke-width="1.1"/>
  <!-- arrange -->
  <rect x="570" y="77.5" width="31" height="30" stroke-width="1.4"/>
  <rect x="573.5" y="81" width="24" height="6.5" stroke-width="1.1"/>
  <rect x="573.5" y="90.5" width="7" height="14" stroke-width="1.1"/>
  <rect x="583" y="90.5" width="14.5" height="5.5" stroke-width="1.1"/>
  <rect x="583" y="98.5" width="14.5" height="6" stroke-width="1.1"/>
 </g>
 <text x="523" y="86" font-family="Liberation Sans" font-size="5" font-weight="bold" fill="#333" letter-spacing="-0.2">AUTO</text>
 <g fill="none" stroke="#d2d2d2" stroke-width="1.4">
  <!-- copy C -->
  <path d="M623.5 104 V77.5 H641 L645 81.5"/>
  <path d="M628.5 81.5 H646.5 L652 87 V109 H628.5Z"/>
  <path d="M645 89.5 Q636 88 636 96 Q636 104 645 102.5"/>
  <!-- P -->
  <path d="M667.5 104 V77.5 H685 L689 81.5"/>
  <path d="M672.5 81.5 H690.5 L696 87 V109 H672.5Z"/>
  <path d="M679 104 V89.5 H686 Q690 89.5 690 93.5 Q690 97.5 686 97.5 H679"/>
  <!-- lines -->
  <path d="M712 80 H741 M712 84.5 H741 M712 89 H741 M712 93.5 H741 M712 98 H741 M712 102.5 H741 M712 106 H741" stroke-width="1.3"/>
 </g>
 <line x1="764.5" y1="78" x2="764.5" y2="108" stroke="#b8b8b8" stroke-width="1.5"/>
 <g fill="none" stroke="#d0d0d0" stroke-width="1.4">
  <!-- move -->
  <path d="M801 78 L796 83 H799 V88 H803 V83 H806Z M801 110 L796 105 H799 V100 H803 V105 H806Z M785 93 L790 88 V91 H795 V95 H790 V98Z M817 93 L812 88 V91 H807 V95 H812 V98Z"/>
  <rect x="799" y="91" width="4" height="4"/>
  <!-- rotate -->
  <path d="M831 98 Q829 82 843 79 Q851 78 856 82"/>
  <path d="M852 79 L862 76 L860 88Z"/>
  <path d="M846 85 L858 96 L846 108 L834 96Z"/>
  <!-- scale -->
  <rect x="876" y="77" width="32" height="31" stroke-dasharray="3 2"/>
  <rect x="876" y="91" width="17" height="17"/>
  <path d="M897 88 L905 80 M899 80 H905 V86"/>
  <!-- lay flat -->
  <path d="M934 82 L953 78 L955 97 L938 99Z"/>
  <path d="M932 92 L922 101 M921 95 L920 104 L928 103Z"/>
  <rect x="923" y="106" width="29" height="2.5" rx="1.2"/>
  <!-- cut -->
  <rect x="968" y="77" width="29" height="13"/>
  <rect x="968" y="94" width="29" height="14"/>
  <line x1="968" y1="92" x2="997" y2="92" stroke-dasharray="2 2"/>
  <!-- boolean -->
  <rect x="1020" y="77" width="22" height="23"/>
  <rect x="1010" y="86" width="23" height="22"/>
  <rect x="1020" y="86" width="13" height="14" fill="#e0e0e0"/>
  <!-- support paint -->
  <path d="M1056 77 H1087 V108 H1074 V91 H1056Z"/>
  <rect x="1056" y="91" width="13" height="17" fill="#e0e0e0"/>
  <!-- seam cube -->
  <path d="M1102 86 L1110 77 H1131 V99 L1123 108 H1102Z M1102 86 H1123 V108 M1123 86 L1131 77"/>
  <path d="M1110 90 Q1113 98 1116 106" stroke-dasharray="1.5 1.5" stroke-width="1"/>
  <!-- text -->
  <path d="M1147 77 H1171 V81 H1161.5 V108 H1156.5 V81 H1147Z"/>
  <path d="M1170 96 Q1177 93 1178 99 V108 M1177 101 Q1169 100 1169 104 Q1170 108 1177 106"/>
  <!-- paint bucket -->
  <path d="M1191 95 L1205 81 L1219 95 L1205 109Z"/>
  <path d="M1196 77 L1205 86" stroke-width="2.5"/>
  <path d="M1214 98 Q1210 104 1214 107 Q1219 108 1218 103Z"/>
  <!-- ruler -->
  <rect x="1238" y="87" width="29" height="12"/>
  <path d="M1243 87 V91 M1248 87 V93 M1253 87 V91 M1258 87 V93 M1263 87 V91" stroke-width="1"/>
  <!-- assembly -->
  <path d="M1292 77 L1307 80 L1305 88 L1290 85Z"/>
  <path d="M1289 86 L1283 90 L1284 95 Z"/>
  <rect x="1284" y="94" width="28" height="5" stroke-dasharray="2 1.5"/>
  <rect x="1284" y="99" width="29" height="8"/>
  <!-- measure/brim -->
  <rect x="1330" y="80" width="24" height="24"/>
  <circle cx="1330" cy="80" r="4.5"/><circle cx="1354" cy="80" r="4.5"/><circle cx="1330" cy="104" r="4.5"/><circle cx="1354" cy="104" r="4.5"/>
 </g>
 <line x1="1380" y1="78" x2="1380" y2="108" stroke="#b8b8b8" stroke-width="1.5"/>
 <!-- puzzle -->
 <g fill="none" stroke="#333" stroke-width="1.4">
  <path d="M1401 84 H1409 Q1411 88 1413 84 H1415 V95 Q1419 97 1415 99 V107 H1401 V97 Q1405 95 1401 93Z"/>
  <line x1="1401" y1="95" x2="1415" y2="95"/>
  <path d="M1415 95 H1423 V107 H1415"/>
  <path d="M1414 83 L1422 76 L1431 84 L1421 94 Z"/>
 </g>
</svg>

<!-- ===== VIEW CUBE ===== -->
<svg class="i" style="left:0;top:0" width="1450" height="853">
 <path d="M441 753 L497 745 L529 760 L529 822 L476 829 L441 815Z" fill="#c8c8c8"/>
 <line x1="441" y1="815" x2="441" y2="755" stroke="#6e88a8" stroke-width="2"/>
 <path d="M436 756 L441 747 L446 756Z" fill="#6e88a8"/>
 <line x1="441" y1="815" x2="469" y2="828" stroke="#c49474" stroke-width="2"/>
 <path d="M465 822 L476 832 L463 833Z" fill="#c49474"/>
 <text x="436" y="740" font-family="Liberation Sans" font-size="9" fill="#6e88a8">Z</text>
 <text x="477" y="840" font-family="Liberation Sans" font-size="9" fill="#c49474">X</text>
 <text x="449" y="790" font-family="Liberation Sans" font-size="9" fill="#444" letter-spacing="-0.3" transform="rotate(20 449 790)">Front</text>
 <text x="487" y="802" font-family="Liberation Sans" font-size="11" fill="#444" transform="rotate(-8 487 802)">Right</text>
 <text x="478" y="759" font-family="Liberation Sans" font-size="7" fill="#444" transform="rotate(20 478 759)">Top</text>
 <circle cx="575.5" cy="820" r="17.5" fill="#f7f7f7"/>
 <g fill="none" stroke="#555" stroke-width="1.3">
  <path d="M566 814 V811 H569 M582 811 H585 V814 M585 826 V829 H582 M569 829 H566 V826"/>
  <path d="M575.5 813.5 L581 816.5 V823 L575.5 826 L570 823 V816.5Z M570 816.5 L575.5 819.5 L581 816.5 M575.5 819.5 V826"/>
 </g>
</svg>

<svg class="i" style="left:0;top:840px" width="12" height="13"><path d="M0 0 H1.5 Q1.5 11.5 10 11.8 V13 H0Z" fill="#6a737c"/></svg>
<!-- ===== ANNOTATION ===== -->
<div class="a" style="left:238px;top:325px;width:121px;height:49px;border:3.5px solid #ff0a0a;border-radius:1px"></div>
<svg class="i" style="left:0;top:0" width="1450" height="853">
 <line x1="456.5" y1="292.5" x2="384" y2="322.5" stroke="#ff1200" stroke-width="6.5" stroke-linecap="round"/>
 <path d="M368.3 328.6 L384.7 310 L383.1 319 L386.2 325.5 L393 330.5Z" fill="#ff1200"/>
</svg>

<!--CONTENT-->
</body></html>
